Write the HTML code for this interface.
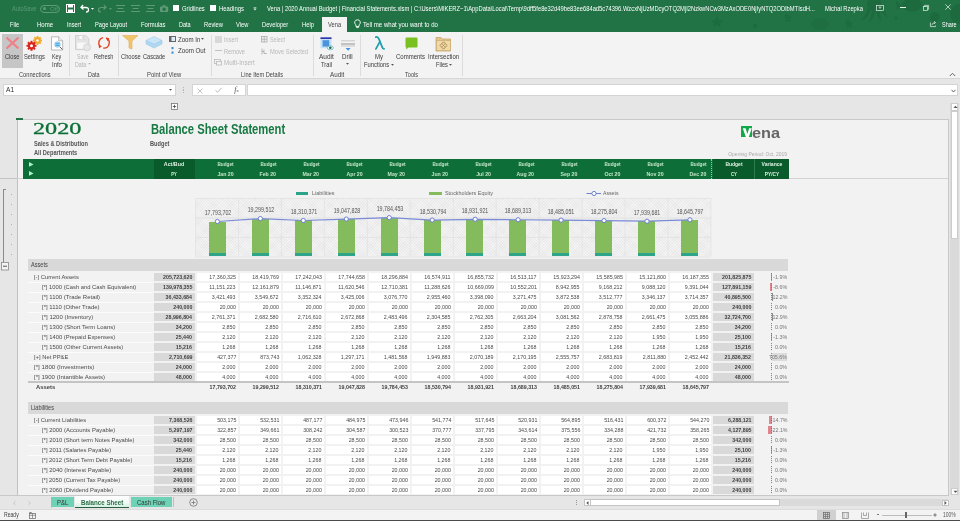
<!DOCTYPE html><html><head><meta charset="utf-8"><style>
html,body{margin:0;padding:0;width:960px;height:521px;overflow:hidden;background:#e6e6e6;}
body{will-change:transform;}
.r{position:absolute;display:block;}
.t{position:absolute;white-space:nowrap;line-height:20px;height:20px;font-family:"Liberation Sans",sans-serif;}
svg.r{overflow:visible;}
</style></head><body>
<div class="r" style="left:0px;top:0px;width:960px;height:32px;background:#217346;"></div>
<svg class="r" style="left:660px;top:0px;" width="300" height="32" viewBox="0 0 300 32"><g fill="#1d6a3e"><ellipse cx="214" cy="4" rx="7" ry="6.5"/><path d="M208 7 Q206 16 201 20 Q205 21 209 14 L211 9Z M212 9 Q212 17 209 22 Q213 21 215 12Z M216 9 Q217 17 221 22 Q220 15 219 9Z M220 7 Q223 15 228 18 Q225 11 222 6Z"/><ellipse cx="252" cy="5" rx="10" ry="6.5"/><path d="M242 5 L236 1 L237 10Z"/><circle cx="275" cy="17" r="5"/><circle cx="300" cy="14" r="10"/><circle cx="236" cy="18" r="1.6"/><circle cx="196" cy="8" r="1.5"/><ellipse cx="160" cy="24" rx="9" ry="6" opacity="0.6"/><path d="M55 20 l2 -4 l2 4 l4 1 l-3 2 l1 4 l-4 -2 l-4 2 l1 -4 l-3 -2Z" opacity="0.8"/><path d="M125 16 l2 -3 l2 3 l3 1 l-2 2 l1 3 l-3 -1 l-3 1 l1 -3 l-2 -2Z" opacity="0.8"/><path d="M186 22 l2 -3 l2 3 l3 1 l-2 2 l1 3 l-3 -1 l-3 1 l1 -3 l-2 -2Z" opacity="0.8"/><circle cx="95" cy="26" r="2"/></g></svg>
<div class="t" style="left:11.5px;top:-1.5px;font-size:7.2px;color:#5f9a78;font-weight:400;font-family:'Liberation Sans',sans-serif;transform:scaleX(0.7850);transform-origin:left center;">AutoSave</div>
<div class="r" style="left:40px;top:4.5px;width:18px;height:6.5px;border:1px solid #5f9a78;border-radius:4px;"></div>
<div class="r" style="left:43px;top:6.5px;width:3px;height:3px;border-radius:50%;background:#5f9a78;"></div>
<div class="t" style="left:50px;top:-1.5px;font-size:6px;color:#5f9a78;font-weight:400;font-family:'Liberation Sans',sans-serif;">Off</div>
<svg class="r" style="left:66px;top:4px;" width="9" height="9" viewBox="0 0 9 9"><rect x="0.5" y="0.5" width="8" height="8" fill="none" stroke="#fff" stroke-width="1"/><rect x="2" y="0.5" width="5" height="3" fill="#fff"/><rect x="2" y="5.5" width="5" height="3" fill="#fff"/></svg>
<svg class="r" style="left:80px;top:3px;" width="16" height="10" viewBox="0 0 16 10"><path d="M3 2 L1 4.5 L3.5 6.5 M1.2 4.5 H5.5 Q8.5 4.5 8.5 7 Q8.5 9 6 9" fill="none" stroke="#fff" stroke-width="1.3"/><path d="M11 5 L14 5 L12.5 6.8Z" fill="#fff"/></svg>
<svg class="r" style="left:98px;top:3px;" width="16" height="10" viewBox="0 0 16 10"><path d="M6 2 L8 4.5 L5.5 6.5 M7.8 4.5 H3.5 Q0.5 4.5 0.5 7 Q0.5 9 3 9" fill="none" stroke="#5f9a78" stroke-width="1.2"/><path d="M11 5 L14 5 L12.5 6.8Z" fill="#5f9a78"/></svg>
<svg class="r" style="left:116px;top:4px;" width="9" height="9" viewBox="0 0 9 9"><path d="M0 1.5H9M1.5 4.5H7.5M0 7.5H9" stroke="#5f9a78" stroke-width="1"/></svg>
<svg class="r" style="left:131px;top:4px;" width="9" height="9" viewBox="0 0 9 9"><path d="M0 1.5H9M1.5 4.5H7.5M0 7.5H9" stroke="#5f9a78" stroke-width="1"/></svg>
<svg class="r" style="left:146px;top:4px;" width="9" height="9" viewBox="0 0 9 9"><path d="M0 1.5H9M1.5 4.5H7.5M0 7.5H9" stroke="#5f9a78" stroke-width="1"/></svg>
<svg class="r" style="left:159.5px;top:4.5px;" width="9" height="7" viewBox="0 0 9 7"><rect x="0" y="1.5" width="8.2" height="5.5" rx="0.8" fill="#5f9a78"/><rect x="2.5" y="0.2" width="3.2" height="1.6" fill="#5f9a78"/><circle cx="4.1" cy="4.2" r="1.7" fill="#217346"/></svg>
<div class="r" style="left:173px;top:5px;width:6px;height:6px;background:#fff;"></div>
<div class="t" style="left:181.75px;top:-1.5px;font-size:7.4px;color:#fff;font-weight:400;font-family:'Liberation Sans',sans-serif;transform:scaleX(0.7793);transform-origin:left center;">Gridlines</div>
<div class="r" style="left:210px;top:5px;width:6px;height:6px;background:#fff;"></div>
<div class="t" style="left:219px;top:-1.5px;font-size:7.4px;color:#fff;font-weight:400;font-family:'Liberation Sans',sans-serif;transform:scaleX(0.7964);transform-origin:left center;">Headings</div>
<svg class="r" style="left:252.5px;top:6.5px;" width="4" height="4" viewBox="0 0 4 4"><path d="M0.6 0.5H3.4" stroke="#e8f0ea" stroke-width="0.6"/><path d="M0.4 1.6H3.6L2 3.6Z" fill="#e8f0ea"/></svg>
<div class="t" style="left:267px;top:-1.0999999999999996px;font-size:7.2px;color:#fff;font-weight:400;font-family:'Liberation Sans',sans-serif;transform:scaleX(0.8052);transform-origin:left center;">Vena | 2020 Annual Budget | Financial Statements.xlsm | C:\Users\MIKERZ~1\AppData\Local\Temp\9dff5fe8e32d49be83ee684ad5c74396.WzcxNjUzMDcyOTQ2MjI2NzkwNCw3MzAxODE0NjIyNTQ2ODlbMTIsdH...</div>
<div class="t" style="left:825px;top:-1.3000000000000007px;font-size:7.2px;color:#fff;font-weight:400;font-family:'Liberation Sans',sans-serif;transform:scaleX(0.8045);transform-origin:left center;">Michal Rzepka</div>
<svg class="r" style="left:876px;top:5px;" width="8" height="6" viewBox="0 0 8 6"><rect x="0.4" y="0.4" width="7" height="5.2" fill="none" stroke="#e8f0ea" stroke-width="0.7"/><path d="M2.5 2.2H5.5M4 1.5V4" stroke="#e8f0ea" stroke-width="0.6"/></svg>
<div class="r" style="left:899.5px;top:7.3px;width:6.5px;height:0.7px;background:#e8f0ea;"></div>
<svg class="r" style="left:922.5px;top:4.5px;" width="6" height="6" viewBox="0 0 6 6"><rect x="0.4" y="1.6" width="4" height="4" fill="none" stroke="#e8f0ea" stroke-width="0.7"/><path d="M1.6 1.6V0.4H5.6V4.4H4.4" fill="none" stroke="#e8f0ea" stroke-width="0.7"/></svg>
<svg class="r" style="left:944.5px;top:4px;" width="6" height="6" viewBox="0 0 6 6"><path d="M0.3 0.3L5.7 5.7M5.7 0.3L0.3 5.7" stroke="#e8f0ea" stroke-width="0.7"/></svg>
<div class="t" style="left:10px;top:14.7px;font-size:6.5px;color:#fff;font-weight:400;font-family:'Liberation Sans',sans-serif;transform:scaleX(0.8600);transform-origin:left center;">File</div>
<div class="t" style="left:37px;top:14.7px;font-size:6.5px;color:#fff;font-weight:400;font-family:'Liberation Sans',sans-serif;transform:scaleX(0.9219);transform-origin:left center;">Home</div>
<div class="t" style="left:67px;top:14.7px;font-size:6.5px;color:#fff;font-weight:400;font-family:'Liberation Sans',sans-serif;transform:scaleX(0.8615);transform-origin:left center;">Insert</div>
<div class="t" style="left:95px;top:14.7px;font-size:6.5px;color:#fff;font-weight:400;font-family:'Liberation Sans',sans-serif;transform:scaleX(0.8768);transform-origin:left center;">Page Layout</div>
<div class="t" style="left:140.6px;top:14.7px;font-size:6.5px;color:#fff;font-weight:400;font-family:'Liberation Sans',sans-serif;transform:scaleX(0.9039);transform-origin:left center;">Formulas</div>
<div class="t" style="left:178.5px;top:14.7px;font-size:6.5px;color:#fff;font-weight:400;font-family:'Liberation Sans',sans-serif;transform:scaleX(0.8511);transform-origin:left center;">Data</div>
<div class="t" style="left:203.6px;top:14.7px;font-size:6.5px;color:#fff;font-weight:400;font-family:'Liberation Sans',sans-serif;transform:scaleX(0.8912);transform-origin:left center;">Review</div>
<div class="t" style="left:235.7px;top:14.7px;font-size:6.5px;color:#fff;font-weight:400;font-family:'Liberation Sans',sans-serif;transform:scaleX(0.8801);transform-origin:left center;">View</div>
<div class="t" style="left:261.9px;top:14.7px;font-size:6.5px;color:#fff;font-weight:400;font-family:'Liberation Sans',sans-serif;transform:scaleX(0.8839);transform-origin:left center;">Developer</div>
<div class="t" style="left:302px;top:14.7px;font-size:6.5px;color:#fff;font-weight:400;font-family:'Liberation Sans',sans-serif;transform:scaleX(0.8984);transform-origin:left center;">Help</div>
<div class="r" style="left:322px;top:17px;width:25px;height:15px;background:#f3f3f3;"></div>
<div class="t" style="left:327.5px;top:14.899999999999999px;font-size:6.5px;color:#444;font-weight:400;font-family:'Liberation Sans',sans-serif;transform:scaleX(0.8820);transform-origin:left center;">Vena</div>
<svg class="r" style="left:354px;top:19px;" width="7" height="10" viewBox="0 0 7 10"><path d="M3.5 0.8 A2.7 2.7 0 0 1 5.3 5.6 L5 7.5 H2 L1.7 5.6 A2.7 2.7 0 0 1 3.5 0.8Z" fill="none" stroke="#fff" stroke-width="0.9"/><path d="M2.3 8.6H4.7" stroke="#fff" stroke-width="0.9"/></svg>
<div class="t" style="left:363.2px;top:14.7px;font-size:6.6px;color:#fff;font-weight:400;font-family:'Liberation Sans',sans-serif;transform:scaleX(0.9209);transform-origin:left center;">Tell me what you want to do</div>
<svg class="r" style="left:929.5px;top:20px;" width="6" height="7" viewBox="0 0 6 7"><path d="M0.4 2.5V6.6H5.6V5.5" fill="none" stroke="#e8f0ea" stroke-width="0.7"/><path d="M1.8 5.2 Q2.2 2.6 5.4 2.6 M4 1.2 L5.5 2.6 L4 4" fill="none" stroke="#e8f0ea" stroke-width="0.7"/></svg>
<div class="t" style="left:941.8px;top:14.7px;font-size:6.5px;color:#fff;font-weight:400;font-family:'Liberation Sans',sans-serif;transform:scaleX(0.8413);transform-origin:left center;">Share</div>
<div class="r" style="left:0px;top:32px;width:960px;height:46px;background:#f3f3f3;"></div>
<div class="r" style="left:0px;top:78px;width:960px;height:1px;background:#d6d6d6;"></div>
<div class="r" style="left:0px;top:79px;width:960px;height:442px;background:#e6e6e6;"></div>
<div class="r" style="left:69px;top:35px;width:1px;height:41px;background:#dcdcdc;"></div>
<div class="r" style="left:117.5px;top:35px;width:1px;height:41px;background:#dcdcdc;"></div>
<div class="r" style="left:210.5px;top:35px;width:1px;height:41px;background:#dcdcdc;"></div>
<div class="r" style="left:313px;top:35px;width:1px;height:41px;background:#dcdcdc;"></div>
<div class="r" style="left:360px;top:35px;width:1px;height:41px;background:#dcdcdc;"></div>
<div class="r" style="left:462px;top:35px;width:1px;height:41px;background:#dcdcdc;"></div>
<div class="r" style="left:2px;top:34px;width:21px;height:34px;background:#c6c6c6;"></div>
<svg class="r" style="left:5px;top:36px;" width="15" height="14" viewBox="0 0 15 14"><path d="M1.5 1.5L13.5 12.5M13.5 1.5L1.5 12.5" stroke="#f07f86" stroke-width="2.2"/></svg>
<div class="t" style="left:5px;top:47.0px;font-size:6.5px;color:#3a3a3a;font-weight:400;font-family:'Liberation Sans',sans-serif;transform:scaleX(0.8731);transform-origin:left center;">Close</div>
<svg class="r" style="left:25px;top:36px;" width="18" height="15" viewBox="0 0 18 15"><g fill="#f5a623"><circle cx="12.5" cy="4.5" r="3.2"/></g><g fill="#f5a623"><rect x="11.6" y="0" width="1.8" height="9" transform="rotate(0 12.5 4.5)"/><rect x="11.6" y="0" width="1.8" height="9" transform="rotate(45 12.5 4.5)"/><rect x="11.6" y="0" width="1.8" height="9" transform="rotate(90 12.5 4.5)"/><rect x="11.6" y="0" width="1.8" height="9" transform="rotate(135 12.5 4.5)"/></g><circle cx="12.5" cy="4.5" r="1.3" fill="#fff"/><circle cx="6.5" cy="9.8" r="3.6" fill="#d9261c"/><rect x="5.5" y="4.8" width="2" height="10" fill="#d9261c" transform="rotate(0 6.5 9.8)"/><rect x="5.5" y="4.8" width="2" height="10" fill="#d9261c" transform="rotate(45 6.5 9.8)"/><rect x="5.5" y="4.8" width="2" height="10" fill="#d9261c" transform="rotate(90 6.5 9.8)"/><rect x="5.5" y="4.8" width="2" height="10" fill="#d9261c" transform="rotate(135 6.5 9.8)"/><circle cx="6.5" cy="9.8" r="1.5" fill="#fff"/></svg>
<div class="t" style="left:24px;top:47.0px;font-size:6.5px;color:#3a3a3a;font-weight:400;font-family:'Liberation Sans',sans-serif;transform:scaleX(0.8937);transform-origin:left center;">Settings</div>
<svg class="r" style="left:50px;top:35.5px;" width="14" height="15" viewBox="0 0 14 15"><path d="M1.5 0.8H8.7L12.7 4.8V14H1.5Z" fill="#fff" stroke="#a3a3a3" stroke-width="0.75"/><path d="M8.7 0.8V4.8H12.7" fill="#eee" stroke="#a3a3a3" stroke-width="0.7"/><path d="M9.6 10.6L12.4 13.4" stroke="#555" stroke-width="0.9"/><circle cx="7.5" cy="8.5" r="2.8" fill="#a9def7" stroke="#79b4e0" stroke-width="0.6"/><path d="M5.6 7.7H9.4M5.6 9.4H9.4" stroke="#2a8fd2" stroke-width="0.8"/></svg>
<div class="t" style="left:52px;top:47.0px;font-size:6.5px;color:#3a3a3a;font-weight:400;font-family:'Liberation Sans',sans-serif;transform:scaleX(0.8250);transform-origin:left center;">Key</div>
<div class="t" style="left:52px;top:54.8px;font-size:6.5px;color:#3a3a3a;font-weight:400;font-family:'Liberation Sans',sans-serif;transform:scaleX(0.9120);transform-origin:left center;">Info</div>
<div class="t" style="left:19px;top:64.5px;font-size:6.3px;color:#444;font-weight:400;font-family:'Liberation Sans',sans-serif;transform:scaleX(0.9021);transform-origin:left center;">Connections</div>
<svg class="r" style="left:74.8px;top:34.8px;" width="17" height="17" viewBox="0 0 17 17"><path d="M0.5 0.5H10.8L13.8 3.5V14.6H0.5Z" fill="#e4e4e4" stroke="#cdcdcd" stroke-width="0.9"/><rect x="3.8" y="0.5" width="6" height="4.2" fill="#f8f8f8" stroke="#d0d0d0" stroke-width="0.6"/><rect x="7.6" y="1.4" width="1.3" height="2.2" fill="#c4c4c4"/><rect x="2.2" y="7.6" width="9.6" height="6" fill="#f8f8f8"/><circle cx="12.1" cy="12.4" r="3.5" fill="#e6e6e6" stroke="#cfcfcf" stroke-width="0.8"/></svg>
<div class="t" style="left:76.8px;top:47.0px;font-size:6.5px;color:#b4b4b4;font-weight:400;font-family:'Liberation Sans',sans-serif;transform:scaleX(0.7895);transform-origin:left center;">Save</div>
<div class="t" style="left:75px;top:54.8px;font-size:6.5px;color:#b4b4b4;font-weight:400;font-family:'Liberation Sans',sans-serif;transform:scaleX(0.8147);transform-origin:left center;">Data</div>
<svg class="r" style="left:88.2px;top:63.400000000000006px;" width="3" height="2" viewBox="0 0 3 2"><path d="M0 0H3L1.5 1.8Z" fill="#bbb"/></svg>
<svg class="r" style="left:97px;top:36px;" width="14" height="14" viewBox="0 0 14 14"><path d="M6.1 1.6 A5.3 5.3 0 0 0 3.0 10.2" fill="none" stroke="#e5411d" stroke-width="1.4"/><path d="M9.4 2.1 A5.3 5.3 0 0 1 6.3 12.05" fill="none" stroke="#e5411d" stroke-width="1.4"/><path d="M8.6 1.6L12.4 2.2L10.6 5.2Z" fill="#e5411d"/><path d="M1.6 8.6L5.0 10.6L2.0 12.2Z" fill="#e5411d"/></svg>
<div class="t" style="left:93.7px;top:47.0px;font-size:6.5px;color:#3a3a3a;font-weight:400;font-family:'Liberation Sans',sans-serif;transform:scaleX(0.8484);transform-origin:left center;">Refresh</div>
<div class="t" style="left:87.8px;top:64.5px;font-size:6.3px;color:#444;font-weight:400;font-family:'Liberation Sans',sans-serif;transform:scaleX(0.8631);transform-origin:left center;">Data</div>
<svg class="r" style="left:122px;top:35px;" width="17" height="15" viewBox="0 0 17 15"><path d="M0.5 0.5H16L10 6V14L7 13V6Z" fill="#f2c46d" stroke="#e0b050" stroke-width="0.6"/></svg>
<div class="t" style="left:120.7px;top:47.0px;font-size:6.5px;color:#3a3a3a;font-weight:400;font-family:'Liberation Sans',sans-serif;transform:scaleX(0.8842);transform-origin:left center;">Choose</div>
<svg class="r" style="left:145px;top:36px;" width="18" height="14" viewBox="0 0 18 14"><path d="M9 0.5L17 4.5L9 8.5L1 4.5Z" fill="#c9e6f8" stroke="#9cc8e6" stroke-width="0.6"/><path d="M1 4.5V8L9 12L17 8V4.5L9 8.5Z" fill="#b0d8f2" stroke="#9cc8e6" stroke-width="0.6"/></svg>
<div class="t" style="left:143px;top:47.0px;font-size:6.5px;color:#3a3a3a;font-weight:400;font-family:'Liberation Sans',sans-serif;transform:scaleX(0.8658);transform-origin:left center;">Cascade</div>
<svg class="r" style="left:168.5px;top:36px;" width="7" height="6" viewBox="0 0 7 6"><rect x="0.5" y="0.5" width="6" height="5" fill="#ddeef8" stroke="#666" stroke-width="1"/><rect x="0.5" y="0.5" width="2" height="5" fill="#666"/></svg>
<div class="t" style="left:177.6px;top:29.799999999999997px;font-size:6.5px;color:#3a3a3a;font-weight:400;font-family:'Liberation Sans',sans-serif;transform:scaleX(0.9390);transform-origin:left center;">Zoom In</div>
<svg class="r" style="left:201.3px;top:38.2px;" width="3" height="2" viewBox="0 0 3 2"><path d="M0 0H3L1.5 1.8Z" fill="#555"/></svg>
<svg class="r" style="left:171px;top:47px;" width="3" height="7" viewBox="0 0 3 7"><rect x="0.5" y="0" width="2" height="2.2" fill="#3a90d8"/><rect x="0.5" y="4.5" width="2" height="2.2" fill="#3a90d8"/></svg>
<div class="t" style="left:177.5px;top:41.3px;font-size:6.5px;color:#3a3a3a;font-weight:400;font-family:'Liberation Sans',sans-serif;transform:scaleX(0.9518);transform-origin:left center;">Zoom Out</div>
<div class="t" style="left:146.8px;top:64.5px;font-size:6.3px;color:#444;font-weight:400;font-family:'Liberation Sans',sans-serif;transform:scaleX(0.9327);transform-origin:left center;">Point of View</div>
<div class="r" style="left:215px;top:36px;width:6.5px;height:6.5px;background:#d8d8d8;"></div>
<div class="t" style="left:224px;top:30.099999999999994px;font-size:6.5px;color:#b8b8b8;font-weight:400;font-family:'Liberation Sans',sans-serif;transform:scaleX(0.8615);transform-origin:left center;">Insert</div>
<div class="r" style="left:215px;top:50px;width:7px;height:1px;background:#c0c0c0;"></div>
<div class="t" style="left:224px;top:41.599999999999994px;font-size:6.5px;color:#b8b8b8;font-weight:400;font-family:'Liberation Sans',sans-serif;transform:scaleX(0.8673);transform-origin:left center;">Remove</div>
<svg class="r" style="left:213.5px;top:59px;" width="9" height="7" viewBox="0 0 9 7"><rect x="0.5" y="0.5" width="6" height="4" fill="none" stroke="#bbb" stroke-width="0.8"/><rect x="2.5" y="2.5" width="5" height="3.5" fill="#f3f3f3" stroke="#bbb" stroke-width="0.8"/></svg>
<div class="t" style="left:224px;top:53.099999999999994px;font-size:6.5px;color:#b8b8b8;font-weight:400;font-family:'Liberation Sans',sans-serif;transform:scaleX(0.9582);transform-origin:left center;">Multi-Insert</div>
<svg class="r" style="left:261px;top:36px;" width="6.5" height="6.5" viewBox="0 0 6.5 6.5"><rect x="0.5" y="0.5" width="5.5" height="5.5" fill="none" stroke="#aaa" stroke-width="0.8"/><path d="M3.2 0.5V6M0.5 3.2H6" stroke="#aaa" stroke-width="0.8"/></svg>
<div class="t" style="left:269.7px;top:30.099999999999994px;font-size:6.5px;color:#b8b8b8;font-weight:400;font-family:'Liberation Sans',sans-serif;transform:scaleX(0.8246);transform-origin:left center;">Select</div>
<svg class="r" style="left:261px;top:47.5px;" width="7" height="7" viewBox="0 0 7 7"><path d="M1 0.5V6.5M1 3.5H3M3 1.5V5.5H6" fill="none" stroke="#aaa" stroke-width="0.8"/></svg>
<div class="t" style="left:269.7px;top:41.599999999999994px;font-size:6.5px;color:#b8b8b8;font-weight:400;font-family:'Liberation Sans',sans-serif;transform:scaleX(0.8907);transform-origin:left center;">Move Selected</div>
<div class="t" style="left:241px;top:64.5px;font-size:6.3px;color:#444;font-weight:400;font-family:'Liberation Sans',sans-serif;transform:scaleX(0.8949);transform-origin:left center;">Line Item Details</div>
<svg class="r" style="left:319.5px;top:36.5px;" width="16" height="15" viewBox="0 0 16 15"><rect x="0.5" y="0.4" width="11" height="10.8" fill="#c4e2f8"/><rect x="0.5" y="0.4" width="11" height="1.5" fill="#23239e"/><rect x="2.6" y="3.2" width="6.6" height="6.4" fill="#4d92dc"/><path d="M2.6 3.2V9.6" stroke="#8cc4ee" stroke-width="0.6"/><ellipse cx="10.3" cy="10.8" rx="3.1" ry="2" fill="#e8f6f6" stroke="#3b8f92" stroke-width="0.5"/><circle cx="10.3" cy="10.8" r="1.3" fill="#0f6f73"/></svg>
<div class="t" style="left:318.8px;top:47.0px;font-size:6.5px;color:#3a3a3a;font-weight:400;font-family:'Liberation Sans',sans-serif;transform:scaleX(0.9987);transform-origin:left center;">Audit</div>
<div class="t" style="left:321px;top:54.7px;font-size:6.5px;color:#3a3a3a;font-weight:400;font-family:'Liberation Sans',sans-serif;transform:scaleX(0.8884);transform-origin:left center;">Trail</div>
<svg class="r" style="left:340.5px;top:39.5px;" width="15" height="12" viewBox="0 0 15 12"><path d="M0 0.8H14M0 4H14M0 6H14" stroke="#b4b4b4" stroke-width="0.7"/><path d="M0 4H14" stroke="#8f8f8f" stroke-width="0.7"/><path d="M4.6 8H9.6L7.1 10.8Z" fill="#4a90d9"/></svg>
<div class="t" style="left:341.9px;top:47.0px;font-size:6.5px;color:#3a3a3a;font-weight:400;font-family:'Liberation Sans',sans-serif;transform:scaleX(0.9481);transform-origin:left center;">Drill</div>
<svg class="r" style="left:345.8px;top:63.3px;" width="3" height="2" viewBox="0 0 3 2"><path d="M0 0H3L1.5 1.8Z" fill="#555"/></svg>
<div class="t" style="left:329.9px;top:64.5px;font-size:6.3px;color:#444;font-weight:400;font-family:'Liberation Sans',sans-serif;transform:scaleX(0.9955);transform-origin:left center;">Audit</div>
<svg class="r" style="left:372.8px;top:35px;" width="13" height="16" viewBox="0 0 13 16"><path d="M2.8 2.1 Q4.9 1.4 6.1 4.4 L9.4 12.6 Q9.9 13.8 11.1 13.8" fill="none" stroke="#1f9fae" stroke-width="1.75" stroke-linecap="round"/><path d="M6.9 6.6 L2.9 13.9" fill="none" stroke="#1f9fae" stroke-width="1.75" stroke-linecap="round"/></svg>
<div class="t" style="left:375px;top:46.699999999999996px;font-size:6.5px;color:#3a3a3a;font-weight:400;font-family:'Liberation Sans',sans-serif;transform:scaleX(0.9219);transform-origin:left center;">My</div>
<div class="t" style="left:363.75px;top:55.05px;font-size:6.5px;color:#3a3a3a;font-weight:400;font-family:'Liberation Sans',sans-serif;transform:scaleX(0.8961);transform-origin:left center;">Functions</div>
<svg class="r" style="left:390.7px;top:63.599999999999994px;" width="3" height="2" viewBox="0 0 3 2"><path d="M0 0H3L1.5 1.8Z" fill="#555"/></svg>
<svg class="r" style="left:404.5px;top:36.5px;" width="13" height="13" viewBox="0 0 13 13"><path d="M1.5 0.5H11.5A1 1 0 0 1 12.5 1.5V9.5A1 1 0 0 1 11.5 10.5H3.5L1.2 12.6V10.5A1 1 0 0 1 0.5 9.5V1.5A1 1 0 0 1 1.5 0.5Z" fill="#7ac020"/></svg>
<div class="t" style="left:396px;top:46.699999999999996px;font-size:6.5px;color:#3a3a3a;font-weight:400;font-family:'Liberation Sans',sans-serif;transform:scaleX(0.9228);transform-origin:left center;">Comments</div>
<svg class="r" style="left:435px;top:34.5px;" width="17" height="17" viewBox="0 0 17 17"><path d="M1 2.5H6L7.5 4H15.5V16H1Z" fill="#e2c58d" stroke="#c9a66a" stroke-width="0.8"/><rect x="1.5" y="5.5" width="14" height="10.2" fill="#f0d9a8" stroke="#c9a66a" stroke-width="0.6"/><path d="M8.5 6.8L12 10.5L8.5 14.2L5 10.5Z" fill="none" stroke="#a58345" stroke-width="0.9"/><path d="M6.8 8.6L10.2 12.3M10.2 8.6L6.8 12.3" stroke="#a58345" stroke-width="0.6"/></svg>
<div class="t" style="left:427.9px;top:46.699999999999996px;font-size:6.5px;color:#3a3a3a;font-weight:400;font-family:'Liberation Sans',sans-serif;transform:scaleX(0.9255);transform-origin:left center;">Intersection</div>
<div class="t" style="left:435.6px;top:55.05px;font-size:6.5px;color:#3a3a3a;font-weight:400;font-family:'Liberation Sans',sans-serif;transform:scaleX(0.8677);transform-origin:left center;">Files</div>
<svg class="r" style="left:448.8px;top:63.599999999999994px;" width="3" height="2" viewBox="0 0 3 2"><path d="M0 0H3L1.5 1.8Z" fill="#555"/></svg>
<div class="t" style="left:405px;top:64.5px;font-size:6.3px;color:#444;font-weight:400;font-family:'Liberation Sans',sans-serif;transform:scaleX(0.8837);transform-origin:left center;">Tools</div>
<svg class="r" style="left:948.5px;top:71.5px;" width="7" height="5" viewBox="0 0 7 5"><path d="M0.8 4L3.5 1.3L6.2 4" fill="none" stroke="#666" stroke-width="1"/></svg>
<div class="r" style="left:2.5px;top:83.8px;width:173.5px;height:12.5px;background:#fff;border:1px solid #d4d4d4;box-sizing:border-box;"></div>
<div class="t" style="left:6.3px;top:80.2px;font-size:7.2px;color:#333;font-weight:400;font-family:'Liberation Sans',sans-serif;transform:scaleX(0.9200);transform-origin:left center;">A1</div>
<svg class="r" style="left:169.3px;top:88.8px;" width="3" height="2" viewBox="0 0 3 2"><path d="M0 0H3L1.5 1.8Z" fill="#555"/></svg>
<div class="r" style="left:183.2px;top:87px;width:0.8px;height:0.9px;background:#b4b4b4;"></div>
<div class="r" style="left:183.2px;top:88.5px;width:0.8px;height:0.9px;background:#b4b4b4;"></div>
<div class="r" style="left:183.2px;top:90px;width:0.8px;height:0.9px;background:#b4b4b4;"></div>
<div class="r" style="left:183.2px;top:91.5px;width:0.8px;height:0.9px;background:#b4b4b4;"></div>
<div class="r" style="left:191.5px;top:83.8px;width:54.5px;height:12.5px;background:#fff;border:1px solid #d4d4d4;box-sizing:border-box;"></div>
<svg class="r" style="left:196.5px;top:87.5px;" width="6" height="6" viewBox="0 0 6 6"><path d="M0.5 0.5L5.5 5.5M5.5 0.5L0.5 5.5" stroke="#bdbdbd" stroke-width="0.9"/></svg>
<svg class="r" style="left:215px;top:87.3px;" width="7" height="6" viewBox="0 0 7 6"><path d="M0.5 3.2L2.6 5.3L6.6 0.8" fill="none" stroke="#b0b0b0" stroke-width="0.9"/></svg>
<div class="t" style="left:-63.5px;width:600px;text-align:center;top:80.0px;font-size:8px;color:#555;font-weight:400;font-family:'Liberation Serif',sans-serif;"><i>f</i><span style="font-size:5px">x</span></div>
<div class="r" style="left:247px;top:83.8px;width:710.5px;height:12.5px;background:#fff;border:1px solid #d4d4d4;box-sizing:border-box;"></div>
<svg class="r" style="left:950.5px;top:88.5px;" width="5" height="4" viewBox="0 0 5 4"><path d="M0.5 0.8L2.5 3L4.5 0.8" fill="none" stroke="#555" stroke-width="0.9"/></svg>
<div class="r" style="left:17px;top:119px;width:931.5px;height:376px;background:#f2f2f2;"></div>
<div class="r" style="left:17px;top:119px;width:931.5px;height:1px;background:#c8c8c8;"></div>
<div class="r" style="left:17px;top:119px;width:1px;height:376px;background:#c0c0c0;"></div>
<div class="r" style="left:948px;top:119px;width:1px;height:376px;background:#c8c8c8;"></div>
<div class="r" style="left:16px;top:118px;width:7px;height:1.5px;background:#217346;"></div>
<div class="r" style="left:0px;top:178px;width:17px;height:1px;background:#c4c4c4;"></div>
<svg class="r" style="left:170.5px;top:103px;" width="7" height="7" viewBox="0 0 7 7"><rect x="0.5" y="0.5" width="6" height="6" fill="#fff" stroke="#777" stroke-width="0.8"/><path d="M1.8 3.5H5.2M3.5 1.8V5.2" stroke="#444" stroke-width="0.8"/></svg>
<div class="r" style="left:3px;top:189px;width:1px;height:73px;background:#8a8a8a;"></div>
<div class="r" style="left:3px;top:189px;width:3px;height:1px;background:#8a8a8a;"></div>
<div class="r" style="left:10.5px;top:193.5px;width:1px;height:1px;background:#b0b0b0;"></div>
<div class="r" style="left:10.5px;top:203.5px;width:1px;height:1px;background:#b0b0b0;"></div>
<div class="r" style="left:10.5px;top:213.5px;width:1px;height:1px;background:#b0b0b0;"></div>
<div class="r" style="left:10.5px;top:223.5px;width:1px;height:1px;background:#b0b0b0;"></div>
<div class="r" style="left:10.5px;top:233.5px;width:1px;height:1px;background:#b0b0b0;"></div>
<div class="r" style="left:10.5px;top:243.5px;width:1px;height:1px;background:#b0b0b0;"></div>
<div class="r" style="left:10.5px;top:253.5px;width:1px;height:1px;background:#b0b0b0;"></div>
<svg class="r" style="left:1px;top:261.5px;" width="8" height="8.5" viewBox="0 0 8 8.5"><rect x="0.5" y="0.5" width="7" height="7.5" fill="#f4f4f4" stroke="#888" stroke-width="0.8"/><path d="M2 4.2H6" stroke="#444" stroke-width="0.9"/></svg>
<div class="r" style="left:949px;top:97px;width:11px;height:398px;background:#e6e6e6;"></div>
<div class="r" style="left:950.3px;top:102.5px;width:8.8px;height:392.5px;background:#dadada;"></div>
<div class="r" style="left:951.2px;top:102.5px;width:7px;height:8px;background:#fff;border:0.5px solid #ccc;box-sizing:border-box;"></div>
<svg class="r" style="left:952.5px;top:104.5px;" width="5" height="4" viewBox="0 0 5 4"><path d="M0.5 3L2.5 0.8L4.5 3Z" fill="#555"/></svg>
<div class="r" style="left:951.2px;top:110.5px;width:7px;height:128px;background:#fff;border:0.5px solid #ccc;box-sizing:border-box;"></div>
<div class="r" style="left:951.2px;top:487.5px;width:7px;height:7.5px;background:#fff;border:0.5px solid #ccc;box-sizing:border-box;"></div>
<svg class="r" style="left:952.5px;top:489.5px;" width="5" height="4" viewBox="0 0 5 4"><path d="M0.5 0.8L2.5 3L4.5 0.8Z" fill="#555"/></svg>
<div class="t" style="left:32.8px;top:118.5px;font-size:16.6px;color:#0c6f35;font-weight:400;font-family:'Liberation Serif',sans-serif;transform:scaleX(1.4578);transform-origin:left center;-webkit-text-stroke:0.3px #0c6f35;">2020</div>
<div class="t" style="left:34px;top:133.6px;font-size:6.6px;color:#555;font-weight:700;font-family:'Liberation Sans',sans-serif;transform:scaleX(0.8612);transform-origin:left center;">Sales &amp; Distribution</div>
<div class="t" style="left:34px;top:143.2px;font-size:6.6px;color:#555;font-weight:700;font-family:'Liberation Sans',sans-serif;transform:scaleX(0.8554);transform-origin:left center;">All Departments</div>
<div class="t" style="left:150.8px;top:118.6px;font-size:14.0px;color:#167a42;font-weight:700;font-family:'Liberation Sans',sans-serif;transform:scaleX(0.8022);transform-origin:left center;">Balance Sheet Statement</div>
<div class="t" style="left:150.2px;top:133.6px;font-size:6.6px;color:#555;font-weight:700;font-family:'Liberation Sans',sans-serif;transform:scaleX(0.8576);transform-origin:left center;">Budget</div>
<div class="r" style="left:740.5px;top:125.5px;width:11px;height:11.5px;background:#13a84a;"></div>
<svg class="r" style="left:740.5px;top:125.5px;" width="11" height="11.5" viewBox="0 0 11 11.5"><path d="M1.8 2.2H4.6L6.3 8L8.2 2.2H10.8L7.6 11.5H5Z" fill="#fff"/></svg>
<div class="t" style="left:751.8px;top:122.6px;font-size:14.0px;color:#666;font-weight:700;font-family:'Liberation Sans',sans-serif;transform:scaleX(1.1643);transform-origin:left center;">ena</div>
<div class="t" style="right:173.20000000000005px;text-align:right;top:143.7px;font-size:6.0px;color:#a8a8a8;font-weight:400;font-family:'Liberation Sans',sans-serif;transform:scaleX(0.8277);transform-origin:right center;">Opening Period: Oct, 2019</div>
<div class="r" style="left:17px;top:178.2px;width:931px;height:0.9px;background:#d2d2d2;"></div>
<div class="r" style="left:22.5px;top:159px;width:766px;height:19.7px;background:#0e6e38;"></div>
<div class="r" style="left:153.5px;top:159px;width:41.5px;height:19.7px;background:#0a5b2c;"></div>
<div class="r" style="left:712.5px;top:159px;width:42px;height:19.7px;background:#0a5b2c;"></div>
<div class="r" style="left:755px;top:159px;width:33.5px;height:19.7px;background:#0a5b2c;"></div>
<div class="r" style="left:754.3px;top:159px;width:0.8px;height:19.7px;background:#2f7d4f;"></div>
<div class="r" style="left:711px;top:159px;width:0;height:19.7px;border-left:1px dotted #9ccaa9;"></div>
<svg class="r" style="left:29px;top:161.5px;" width="5" height="5" viewBox="0 0 5 5"><path d="M0 0L4.5 2.4L0 4.8Z" fill="#b3f0cf"/></svg>
<svg class="r" style="left:29px;top:171.2px;" width="5" height="5" viewBox="0 0 5 5"><path d="M0 0L4.5 2.4L0 4.8Z" fill="#b3f0cf"/></svg>
<div class="t" style="left:-125.6px;width:600px;text-align:center;top:153.9px;font-size:6.0px;color:#dff2e3;font-weight:700;font-family:'Liberation Sans',sans-serif;transform:scaleX(0.8822);transform-origin:center center;">Act/Bud</div>
<div class="t" style="left:-125.6px;width:600px;text-align:center;top:163.7px;font-size:6.0px;color:#dff2e3;font-weight:700;font-family:'Liberation Sans',sans-serif;transform:scaleX(0.6742);transform-origin:center center;">PY</div>
<div class="t" style="right:726.6px;text-align:right;top:153.9px;font-size:6.0px;color:#c2e4c8;font-weight:700;font-family:'Liberation Sans',sans-serif;transform:scaleX(0.7837);transform-origin:right center;">Budget</div>
<div class="t" style="right:726.6px;text-align:right;top:163.7px;font-size:6.0px;color:#c2e4c8;font-weight:700;font-family:'Liberation Sans',sans-serif;transform:scaleX(0.8700);transform-origin:right center;">Jan 20</div>
<div class="t" style="right:683.6px;text-align:right;top:153.9px;font-size:6.0px;color:#c2e4c8;font-weight:700;font-family:'Liberation Sans',sans-serif;transform:scaleX(0.7837);transform-origin:right center;">Budget</div>
<div class="t" style="right:683.6px;text-align:right;top:163.7px;font-size:6.0px;color:#c2e4c8;font-weight:700;font-family:'Liberation Sans',sans-serif;transform:scaleX(0.8700);transform-origin:right center;">Feb 20</div>
<div class="t" style="right:640.6px;text-align:right;top:153.9px;font-size:6.0px;color:#c2e4c8;font-weight:700;font-family:'Liberation Sans',sans-serif;transform:scaleX(0.7837);transform-origin:right center;">Budget</div>
<div class="t" style="right:640.6px;text-align:right;top:163.7px;font-size:6.0px;color:#c2e4c8;font-weight:700;font-family:'Liberation Sans',sans-serif;transform:scaleX(0.8700);transform-origin:right center;">Mar 20</div>
<div class="t" style="right:597.6px;text-align:right;top:153.9px;font-size:6.0px;color:#c2e4c8;font-weight:700;font-family:'Liberation Sans',sans-serif;transform:scaleX(0.7837);transform-origin:right center;">Budget</div>
<div class="t" style="right:597.6px;text-align:right;top:163.7px;font-size:6.0px;color:#c2e4c8;font-weight:700;font-family:'Liberation Sans',sans-serif;transform:scaleX(0.8700);transform-origin:right center;">Apr 20</div>
<div class="t" style="right:554.6px;text-align:right;top:153.9px;font-size:6.0px;color:#c2e4c8;font-weight:700;font-family:'Liberation Sans',sans-serif;transform:scaleX(0.7837);transform-origin:right center;">Budget</div>
<div class="t" style="right:554.6px;text-align:right;top:163.7px;font-size:6.0px;color:#c2e4c8;font-weight:700;font-family:'Liberation Sans',sans-serif;transform:scaleX(0.8700);transform-origin:right center;">May 20</div>
<div class="t" style="right:511.6px;text-align:right;top:153.9px;font-size:6.0px;color:#c2e4c8;font-weight:700;font-family:'Liberation Sans',sans-serif;transform:scaleX(0.7837);transform-origin:right center;">Budget</div>
<div class="t" style="right:511.6px;text-align:right;top:163.7px;font-size:6.0px;color:#c2e4c8;font-weight:700;font-family:'Liberation Sans',sans-serif;transform:scaleX(0.8700);transform-origin:right center;">Jun 20</div>
<div class="t" style="right:468.6px;text-align:right;top:153.9px;font-size:6.0px;color:#c2e4c8;font-weight:700;font-family:'Liberation Sans',sans-serif;transform:scaleX(0.7837);transform-origin:right center;">Budget</div>
<div class="t" style="right:468.6px;text-align:right;top:163.7px;font-size:6.0px;color:#c2e4c8;font-weight:700;font-family:'Liberation Sans',sans-serif;transform:scaleX(0.8700);transform-origin:right center;">Jul 20</div>
<div class="t" style="right:425.6px;text-align:right;top:153.9px;font-size:6.0px;color:#c2e4c8;font-weight:700;font-family:'Liberation Sans',sans-serif;transform:scaleX(0.7837);transform-origin:right center;">Budget</div>
<div class="t" style="right:425.6px;text-align:right;top:163.7px;font-size:6.0px;color:#c2e4c8;font-weight:700;font-family:'Liberation Sans',sans-serif;transform:scaleX(0.8700);transform-origin:right center;">Aug 20</div>
<div class="t" style="right:382.6px;text-align:right;top:153.9px;font-size:6.0px;color:#c2e4c8;font-weight:700;font-family:'Liberation Sans',sans-serif;transform:scaleX(0.7837);transform-origin:right center;">Budget</div>
<div class="t" style="right:382.6px;text-align:right;top:163.7px;font-size:6.0px;color:#c2e4c8;font-weight:700;font-family:'Liberation Sans',sans-serif;transform:scaleX(0.8700);transform-origin:right center;">Sep 20</div>
<div class="t" style="right:339.6px;text-align:right;top:153.9px;font-size:6.0px;color:#c2e4c8;font-weight:700;font-family:'Liberation Sans',sans-serif;transform:scaleX(0.7837);transform-origin:right center;">Budget</div>
<div class="t" style="right:339.6px;text-align:right;top:163.7px;font-size:6.0px;color:#c2e4c8;font-weight:700;font-family:'Liberation Sans',sans-serif;transform:scaleX(0.8700);transform-origin:right center;">Oct 20</div>
<div class="t" style="right:296.6px;text-align:right;top:153.9px;font-size:6.0px;color:#c2e4c8;font-weight:700;font-family:'Liberation Sans',sans-serif;transform:scaleX(0.7837);transform-origin:right center;">Budget</div>
<div class="t" style="right:296.6px;text-align:right;top:163.7px;font-size:6.0px;color:#c2e4c8;font-weight:700;font-family:'Liberation Sans',sans-serif;transform:scaleX(0.8700);transform-origin:right center;">Nov 20</div>
<div class="t" style="right:253.60000000000002px;text-align:right;top:153.9px;font-size:6.0px;color:#c2e4c8;font-weight:700;font-family:'Liberation Sans',sans-serif;transform:scaleX(0.7837);transform-origin:right center;">Budget</div>
<div class="t" style="right:253.60000000000002px;text-align:right;top:163.7px;font-size:6.0px;color:#c2e4c8;font-weight:700;font-family:'Liberation Sans',sans-serif;transform:scaleX(0.8700);transform-origin:right center;">Dec 20</div>
<div class="t" style="left:433.6px;width:600px;text-align:center;top:153.9px;font-size:6.0px;color:#dff2e3;font-weight:700;font-family:'Liberation Sans',sans-serif;transform:scaleX(0.8273);transform-origin:center center;">Budget</div>
<div class="t" style="left:433.6px;width:600px;text-align:center;top:163.7px;font-size:6.0px;color:#dff2e3;font-weight:700;font-family:'Liberation Sans',sans-serif;transform:scaleX(0.7194);transform-origin:center center;">CY</div>
<div class="t" style="left:471.5px;width:600px;text-align:center;top:153.9px;font-size:6.0px;color:#dff2e3;font-weight:700;font-family:'Liberation Sans',sans-serif;transform:scaleX(0.8465);transform-origin:center center;">Variance</div>
<div class="t" style="left:471.5px;width:600px;text-align:center;top:163.7px;font-size:6.0px;color:#dff2e3;font-weight:700;font-family:'Liberation Sans',sans-serif;transform:scaleX(0.8000);transform-origin:center center;">PY/CY</div>
<div class="r" style="left:195.2px;top:198px;width:515.8px;height:58.19999999999999px;background-color:#f4f4f4;background-image:repeating-linear-gradient(45deg,rgba(0,0,0,0.022) 0 1px,transparent 1px 2px),repeating-linear-gradient(-45deg,rgba(0,0,0,0.022) 0 1px,transparent 1px 2px);"></div>
<svg class="r" style="left:195.2px;top:198px;" width="516.8" height="59.19999999999999" viewBox="0 0 516.8 59.19999999999999"><path d="M0.50 0V58.19999999999999" stroke="#e2e2e2" stroke-width="0.8"/><path d="M43.46 0V58.19999999999999" stroke="#e2e2e2" stroke-width="0.8"/><path d="M86.42 0V58.19999999999999" stroke="#e2e2e2" stroke-width="0.8"/><path d="M129.38 0V58.19999999999999" stroke="#e2e2e2" stroke-width="0.8"/><path d="M172.34 0V58.19999999999999" stroke="#e2e2e2" stroke-width="0.8"/><path d="M215.30 0V58.19999999999999" stroke="#e2e2e2" stroke-width="0.8"/><path d="M258.26 0V58.19999999999999" stroke="#e2e2e2" stroke-width="0.8"/><path d="M301.22 0V58.19999999999999" stroke="#e2e2e2" stroke-width="0.8"/><path d="M344.18 0V58.19999999999999" stroke="#e2e2e2" stroke-width="0.8"/><path d="M387.14 0V58.19999999999999" stroke="#e2e2e2" stroke-width="0.8"/><path d="M430.10 0V58.19999999999999" stroke="#e2e2e2" stroke-width="0.8"/><path d="M473.06 0V58.19999999999999" stroke="#e2e2e2" stroke-width="0.8"/><path d="M516.02 0V58.19999999999999" stroke="#e2e2e2" stroke-width="0.8"/><path d="M0 0.50H515.8" stroke="#e2e2e2" stroke-width="0.8"/><path d="M0 20.00H515.8" stroke="#e2e2e2" stroke-width="0.8"/><path d="M0 39.50H515.8" stroke="#e2e2e2" stroke-width="0.8"/><path d="M0 59.00H515.8" stroke="#e2e2e2" stroke-width="0.8"/></svg>
<div class="r" style="left:208.70000000000002px;top:221.5022811px;width:17px;height:34.697718899999984px;background:#84bb5c;"></div>
<div class="r" style="left:208.70000000000002px;top:253.39999999999998px;width:17px;height:2.8px;background:#2ea58b;"></div>
<div class="r" style="left:251.66000000000003px;top:218.5659516px;width:17px;height:37.63404839999998px;background:#84bb5c;"></div>
<div class="r" style="left:251.66000000000003px;top:253.39999999999998px;width:17px;height:2.8px;background:#2ea58b;"></div>
<div class="r" style="left:294.62px;top:220.49477654999998px;width:17px;height:35.705223450000005px;background:#84bb5c;"></div>
<div class="r" style="left:294.62px;top:253.39999999999998px;width:17px;height:2.8px;background:#2ea58b;"></div>
<div class="r" style="left:337.58px;top:219.05673539999998px;width:17px;height:37.14326460000001px;background:#84bb5c;"></div>
<div class="r" style="left:337.58px;top:253.39999999999998px;width:17px;height:2.8px;background:#2ea58b;"></div>
<div class="r" style="left:380.54px;top:217.62031664999998px;width:17px;height:38.57968335000001px;background:#84bb5c;"></div>
<div class="r" style="left:380.54px;top:253.39999999999998px;width:17px;height:2.8px;background:#2ea58b;"></div>
<div class="r" style="left:423.50000000000006px;top:220.0649517px;width:17px;height:36.135048299999994px;background:#84bb5c;"></div>
<div class="r" style="left:423.50000000000006px;top:253.39999999999998px;width:17px;height:2.8px;background:#2ea58b;"></div>
<div class="r" style="left:466.46px;top:219.28275405px;width:17px;height:36.917245949999995px;background:#84bb5c;"></div>
<div class="r" style="left:466.46px;top:253.39999999999998px;width:17px;height:2.8px;background:#2ea58b;"></div>
<div class="r" style="left:509.42px;top:219.75583964999998px;width:17px;height:36.444160350000004px;background:#84bb5c;"></div>
<div class="r" style="left:509.42px;top:253.39999999999998px;width:17px;height:2.8px;background:#2ea58b;"></div>
<div class="r" style="left:552.38px;top:220.15415055px;width:17px;height:36.04584944999999px;background:#84bb5c;"></div>
<div class="r" style="left:552.38px;top:253.39999999999998px;width:17px;height:2.8px;background:#2ea58b;"></div>
<div class="r" style="left:595.3399999999999px;top:220.5621822px;width:17px;height:35.63781779999999px;background:#84bb5c;"></div>
<div class="r" style="left:595.3399999999999px;top:253.39999999999998px;width:17px;height:2.8px;background:#2ea58b;"></div>
<div class="r" style="left:638.3px;top:221.21762205px;width:17px;height:34.98237795px;background:#84bb5c;"></div>
<div class="r" style="left:638.3px;top:253.39999999999998px;width:17px;height:2.8px;background:#2ea58b;"></div>
<div class="r" style="left:681.26px;top:219.84069584999997px;width:17px;height:36.359304150000014px;background:#84bb5c;"></div>
<div class="r" style="left:681.26px;top:253.39999999999998px;width:17px;height:2.8px;background:#2ea58b;"></div>
<svg class="r" style="left:190px;top:190px;" width="530" height="80" viewBox="0 0 530 80"><polyline points="27.40,31.50 70.36,28.57 113.32,30.49 156.28,29.06 199.24,27.62 242.20,30.06 285.16,29.28 328.12,29.76 371.08,30.15 414.04,30.56 457.00,31.22 499.96,29.84" fill="none" stroke="#7a8bd8" stroke-width="1.2"/><circle cx="27.40" cy="31.50" r="2.1" fill="#fff" stroke="#6d7fcf" stroke-width="1"/><circle cx="70.36" cy="28.57" r="2.1" fill="#fff" stroke="#6d7fcf" stroke-width="1"/><circle cx="113.32" cy="30.49" r="2.1" fill="#fff" stroke="#6d7fcf" stroke-width="1"/><circle cx="156.28" cy="29.06" r="2.1" fill="#fff" stroke="#6d7fcf" stroke-width="1"/><circle cx="199.24" cy="27.62" r="2.1" fill="#fff" stroke="#6d7fcf" stroke-width="1"/><circle cx="242.20" cy="30.06" r="2.1" fill="#fff" stroke="#6d7fcf" stroke-width="1"/><circle cx="285.16" cy="29.28" r="2.1" fill="#fff" stroke="#6d7fcf" stroke-width="1"/><circle cx="328.12" cy="29.76" r="2.1" fill="#fff" stroke="#6d7fcf" stroke-width="1"/><circle cx="371.08" cy="30.15" r="2.1" fill="#fff" stroke="#6d7fcf" stroke-width="1"/><circle cx="414.04" cy="30.56" r="2.1" fill="#fff" stroke="#6d7fcf" stroke-width="1"/><circle cx="457.00" cy="31.22" r="2.1" fill="#fff" stroke="#6d7fcf" stroke-width="1"/><circle cx="499.96" cy="29.84" r="2.1" fill="#fff" stroke="#6d7fcf" stroke-width="1"/></svg>
<div class="t" style="left:-82.29999999999998px;width:600px;text-align:center;top:203.2022811px;font-size:6.7px;color:#555;font-weight:400;font-family:'Liberation Sans',sans-serif;transform:scaleX(0.7962);transform-origin:center center;">17,793,702</div>
<div class="t" style="left:-39.339999999999975px;width:600px;text-align:center;top:200.2659516px;font-size:6.7px;color:#555;font-weight:400;font-family:'Liberation Sans',sans-serif;transform:scaleX(0.7962);transform-origin:center center;">19,299,512</div>
<div class="t" style="left:3.6200000000000045px;width:600px;text-align:center;top:202.19477654999997px;font-size:6.7px;color:#555;font-weight:400;font-family:'Liberation Sans',sans-serif;transform:scaleX(0.7962);transform-origin:center center;">18,310,371</div>
<div class="t" style="left:46.579999999999984px;width:600px;text-align:center;top:200.75673539999997px;font-size:6.7px;color:#555;font-weight:400;font-family:'Liberation Sans',sans-serif;transform:scaleX(0.7962);transform-origin:center center;">19,047,828</div>
<div class="t" style="left:89.54000000000002px;width:600px;text-align:center;top:199.32031664999997px;font-size:6.7px;color:#555;font-weight:400;font-family:'Liberation Sans',sans-serif;transform:scaleX(0.7962);transform-origin:center center;">19,784,453</div>
<div class="t" style="left:132.50000000000006px;width:600px;text-align:center;top:201.76495169999998px;font-size:6.7px;color:#555;font-weight:400;font-family:'Liberation Sans',sans-serif;transform:scaleX(0.7962);transform-origin:center center;">18,530,794</div>
<div class="t" style="left:175.45999999999998px;width:600px;text-align:center;top:200.98275404999998px;font-size:6.7px;color:#555;font-weight:400;font-family:'Liberation Sans',sans-serif;transform:scaleX(0.7962);transform-origin:center center;">18,931,921</div>
<div class="t" style="left:218.41999999999996px;width:600px;text-align:center;top:201.45583964999997px;font-size:6.7px;color:#555;font-weight:400;font-family:'Liberation Sans',sans-serif;transform:scaleX(0.7962);transform-origin:center center;">18,689,313</div>
<div class="t" style="left:261.38px;width:600px;text-align:center;top:201.85415054999999px;font-size:6.7px;color:#555;font-weight:400;font-family:'Liberation Sans',sans-serif;transform:scaleX(0.7962);transform-origin:center center;">18,485,051</div>
<div class="t" style="left:304.3399999999999px;width:600px;text-align:center;top:202.26218219999998px;font-size:6.7px;color:#555;font-weight:400;font-family:'Liberation Sans',sans-serif;transform:scaleX(0.7962);transform-origin:center center;">18,275,804</div>
<div class="t" style="left:347.29999999999995px;width:600px;text-align:center;top:202.91762204999998px;font-size:6.7px;color:#555;font-weight:400;font-family:'Liberation Sans',sans-serif;transform:scaleX(0.7962);transform-origin:center center;">17,939,681</div>
<div class="t" style="left:390.26px;width:600px;text-align:center;top:201.54069584999996px;font-size:6.7px;color:#555;font-weight:400;font-family:'Liberation Sans',sans-serif;transform:scaleX(0.7962);transform-origin:center center;">18,645,797</div>
<div class="r" style="left:296px;top:192px;width:12.3px;height:3.2px;background:#2ba38a;"></div>
<div class="t" style="left:311.8px;top:183.3px;font-size:6.0px;color:#666;font-weight:400;font-family:'Liberation Sans',sans-serif;transform:scaleX(0.9072);transform-origin:left center;">Liabilities</div>
<div class="r" style="left:428.8px;top:192px;width:13.2px;height:3.2px;background:#84bb5c;"></div>
<div class="t" style="left:445px;top:183.3px;font-size:6.0px;color:#666;font-weight:400;font-family:'Liberation Sans',sans-serif;transform:scaleX(0.9031);transform-origin:left center;">Stockholders Equity</div>
<svg class="r" style="left:586px;top:190px;" width="16" height="7" viewBox="0 0 16 7"><path d="M0.5 3.5H15" stroke="#6d7fcf" stroke-width="1"/><circle cx="8" cy="3.5" r="2.1" fill="#fff" stroke="#6d7fcf" stroke-width="1"/></svg>
<div class="t" style="left:603.3px;top:183.3px;font-size:6.0px;color:#666;font-weight:400;font-family:'Liberation Sans',sans-serif;transform:scaleX(0.8583);transform-origin:left center;">Assets</div>
<div class="r" style="left:28px;top:259px;width:759.8px;height:12px;background:#d9d9d9;"></div>
<div class="t" style="left:30.7px;top:255.39999999999998px;font-size:6.8px;color:#444;font-weight:400;font-family:'Liberation Sans',sans-serif;transform:scaleX(0.8200);transform-origin:left center;">Assets</div>
<div class="t" style="left:33.8px;top:266.9px;font-size:5.9px;color:#4a4a4a;font-weight:400;font-family:'Liberation Sans',sans-serif;transform:scaleX(0.9851);transform-origin:left center;">[-] Current Assets</div>
<div class="r" style="left:154px;top:273px;width:41px;height:8px;background:#d9d9d9;"></div>
<div class="t" style="right:767.6px;text-align:right;top:267.0px;font-size:6.2px;color:#3e3e3e;font-weight:700;font-family:'Liberation Sans',sans-serif;transform:scaleX(0.8530);transform-origin:right center;">205,723,620</div>
<div class="r" style="left:197px;top:273px;width:41px;height:8px;background:#fff;"></div>
<div class="t" style="right:724.1px;text-align:right;top:267.0px;font-size:6.2px;color:#4a4a4a;font-weight:400;font-family:'Liberation Sans',sans-serif;transform:scaleX(0.8600);transform-origin:right center;">17,360,325</div>
<div class="r" style="left:240px;top:273px;width:41px;height:8px;background:#fff;"></div>
<div class="t" style="right:681.1px;text-align:right;top:267.0px;font-size:6.2px;color:#4a4a4a;font-weight:400;font-family:'Liberation Sans',sans-serif;transform:scaleX(0.8600);transform-origin:right center;">18,419,769</div>
<div class="r" style="left:283px;top:273px;width:41px;height:8px;background:#fff;"></div>
<div class="t" style="right:638.1px;text-align:right;top:267.0px;font-size:6.2px;color:#4a4a4a;font-weight:400;font-family:'Liberation Sans',sans-serif;transform:scaleX(0.8600);transform-origin:right center;">17,242,043</div>
<div class="r" style="left:326px;top:273px;width:41px;height:8px;background:#fff;"></div>
<div class="t" style="right:595.1px;text-align:right;top:267.0px;font-size:6.2px;color:#4a4a4a;font-weight:400;font-family:'Liberation Sans',sans-serif;transform:scaleX(0.8600);transform-origin:right center;">17,744,658</div>
<div class="r" style="left:369px;top:273px;width:41px;height:8px;background:#fff;"></div>
<div class="t" style="right:552.1px;text-align:right;top:267.0px;font-size:6.2px;color:#4a4a4a;font-weight:400;font-family:'Liberation Sans',sans-serif;transform:scaleX(0.8600);transform-origin:right center;">18,296,884</div>
<div class="r" style="left:412px;top:273px;width:41px;height:8px;background:#fff;"></div>
<div class="t" style="right:509.1px;text-align:right;top:267.0px;font-size:6.2px;color:#4a4a4a;font-weight:400;font-family:'Liberation Sans',sans-serif;transform:scaleX(0.8600);transform-origin:right center;">16,574,911</div>
<div class="r" style="left:455px;top:273px;width:41px;height:8px;background:#fff;"></div>
<div class="t" style="right:466.1px;text-align:right;top:267.0px;font-size:6.2px;color:#4a4a4a;font-weight:400;font-family:'Liberation Sans',sans-serif;transform:scaleX(0.8600);transform-origin:right center;">16,855,732</div>
<div class="r" style="left:498px;top:273px;width:41px;height:8px;background:#fff;"></div>
<div class="t" style="right:423.1px;text-align:right;top:267.0px;font-size:6.2px;color:#4a4a4a;font-weight:400;font-family:'Liberation Sans',sans-serif;transform:scaleX(0.8600);transform-origin:right center;">16,513,117</div>
<div class="r" style="left:541px;top:273px;width:41px;height:8px;background:#fff;"></div>
<div class="t" style="right:380.1px;text-align:right;top:267.0px;font-size:6.2px;color:#4a4a4a;font-weight:400;font-family:'Liberation Sans',sans-serif;transform:scaleX(0.8600);transform-origin:right center;">15,923,294</div>
<div class="r" style="left:584px;top:273px;width:41px;height:8px;background:#fff;"></div>
<div class="t" style="right:337.1px;text-align:right;top:267.0px;font-size:6.2px;color:#4a4a4a;font-weight:400;font-family:'Liberation Sans',sans-serif;transform:scaleX(0.8600);transform-origin:right center;">15,585,985</div>
<div class="r" style="left:627px;top:273px;width:41px;height:8px;background:#fff;"></div>
<div class="t" style="right:294.1px;text-align:right;top:267.0px;font-size:6.2px;color:#4a4a4a;font-weight:400;font-family:'Liberation Sans',sans-serif;transform:scaleX(0.8600);transform-origin:right center;">15,121,800</div>
<div class="r" style="left:670px;top:273px;width:41px;height:8px;background:#fff;"></div>
<div class="t" style="right:251.10000000000002px;text-align:right;top:267.0px;font-size:6.2px;color:#4a4a4a;font-weight:400;font-family:'Liberation Sans',sans-serif;transform:scaleX(0.8600);transform-origin:right center;">16,187,355</div>
<div class="r" style="left:713px;top:273px;width:41px;height:8px;background:#d9d9d9;"></div>
<div class="t" style="right:208.60000000000002px;text-align:right;top:267.0px;font-size:6.2px;color:#3e3e3e;font-weight:700;font-family:'Liberation Sans',sans-serif;transform:scaleX(0.8530);transform-origin:right center;">201,825,875</div>
<div class="r" style="left:771.296px;top:273px;width:0.304px;height:8px;background:#e0868f;"></div>
<svg class="r" style="left:771px;top:273px;" width="1" height="8" viewBox="0 0 1 8"><path d="M0.5 0V8" stroke="#7a7a7a" stroke-width="0.9" stroke-dasharray="1.1 0.9"/></svg>
<div class="t" style="right:172.70000000000005px;text-align:right;top:267.0px;font-size:6.2px;color:#777;font-weight:400;font-family:'Liberation Sans',sans-serif;transform:scaleX(0.8600);transform-origin:right center;">-1.9%</div>
<div class="r" style="left:28px;top:281.7px;width:125px;height:1px;background:#fcfcfc;"></div>
<div class="t" style="left:41.9px;top:276.9px;font-size:5.9px;color:#4a4a4a;font-weight:400;font-family:'Liberation Sans',sans-serif;transform:scaleX(0.9858);transform-origin:left center;">[*] 1000 (Cash and Cash Equivalent)</div>
<div class="r" style="left:154px;top:283px;width:41px;height:8px;background:#d9d9d9;"></div>
<div class="t" style="right:767.6px;text-align:right;top:277.0px;font-size:6.2px;color:#3e3e3e;font-weight:700;font-family:'Liberation Sans',sans-serif;transform:scaleX(0.8530);transform-origin:right center;">139,978,355</div>
<div class="r" style="left:197px;top:283px;width:41px;height:8px;background:#fff;"></div>
<div class="t" style="right:724.1px;text-align:right;top:277.0px;font-size:6.2px;color:#4a4a4a;font-weight:400;font-family:'Liberation Sans',sans-serif;transform:scaleX(0.8600);transform-origin:right center;">11,151,223</div>
<div class="r" style="left:240px;top:283px;width:41px;height:8px;background:#fff;"></div>
<div class="t" style="right:681.1px;text-align:right;top:277.0px;font-size:6.2px;color:#4a4a4a;font-weight:400;font-family:'Liberation Sans',sans-serif;transform:scaleX(0.8600);transform-origin:right center;">12,161,879</div>
<div class="r" style="left:283px;top:283px;width:41px;height:8px;background:#fff;"></div>
<div class="t" style="right:638.1px;text-align:right;top:277.0px;font-size:6.2px;color:#4a4a4a;font-weight:400;font-family:'Liberation Sans',sans-serif;transform:scaleX(0.8600);transform-origin:right center;">11,146,871</div>
<div class="r" style="left:326px;top:283px;width:41px;height:8px;background:#fff;"></div>
<div class="t" style="right:595.1px;text-align:right;top:277.0px;font-size:6.2px;color:#4a4a4a;font-weight:400;font-family:'Liberation Sans',sans-serif;transform:scaleX(0.8600);transform-origin:right center;">11,620,546</div>
<div class="r" style="left:369px;top:283px;width:41px;height:8px;background:#fff;"></div>
<div class="t" style="right:552.1px;text-align:right;top:277.0px;font-size:6.2px;color:#4a4a4a;font-weight:400;font-family:'Liberation Sans',sans-serif;transform:scaleX(0.8600);transform-origin:right center;">12,710,381</div>
<div class="r" style="left:412px;top:283px;width:41px;height:8px;background:#fff;"></div>
<div class="t" style="right:509.1px;text-align:right;top:277.0px;font-size:6.2px;color:#4a4a4a;font-weight:400;font-family:'Liberation Sans',sans-serif;transform:scaleX(0.8600);transform-origin:right center;">11,288,626</div>
<div class="r" style="left:455px;top:283px;width:41px;height:8px;background:#fff;"></div>
<div class="t" style="right:466.1px;text-align:right;top:277.0px;font-size:6.2px;color:#4a4a4a;font-weight:400;font-family:'Liberation Sans',sans-serif;transform:scaleX(0.8600);transform-origin:right center;">10,669,099</div>
<div class="r" style="left:498px;top:283px;width:41px;height:8px;background:#fff;"></div>
<div class="t" style="right:423.1px;text-align:right;top:277.0px;font-size:6.2px;color:#4a4a4a;font-weight:400;font-family:'Liberation Sans',sans-serif;transform:scaleX(0.8600);transform-origin:right center;">10,552,201</div>
<div class="r" style="left:541px;top:283px;width:41px;height:8px;background:#fff;"></div>
<div class="t" style="right:380.1px;text-align:right;top:277.0px;font-size:6.2px;color:#4a4a4a;font-weight:400;font-family:'Liberation Sans',sans-serif;transform:scaleX(0.8600);transform-origin:right center;">8,942,955</div>
<div class="r" style="left:584px;top:283px;width:41px;height:8px;background:#fff;"></div>
<div class="t" style="right:337.1px;text-align:right;top:277.0px;font-size:6.2px;color:#4a4a4a;font-weight:400;font-family:'Liberation Sans',sans-serif;transform:scaleX(0.8600);transform-origin:right center;">9,168,212</div>
<div class="r" style="left:627px;top:283px;width:41px;height:8px;background:#fff;"></div>
<div class="t" style="right:294.1px;text-align:right;top:277.0px;font-size:6.2px;color:#4a4a4a;font-weight:400;font-family:'Liberation Sans',sans-serif;transform:scaleX(0.8600);transform-origin:right center;">9,088,120</div>
<div class="r" style="left:670px;top:283px;width:41px;height:8px;background:#fff;"></div>
<div class="t" style="right:251.10000000000002px;text-align:right;top:277.0px;font-size:6.2px;color:#4a4a4a;font-weight:400;font-family:'Liberation Sans',sans-serif;transform:scaleX(0.8600);transform-origin:right center;">9,391,044</div>
<div class="r" style="left:713px;top:283px;width:41px;height:8px;background:#d9d9d9;"></div>
<div class="t" style="right:208.60000000000002px;text-align:right;top:277.0px;font-size:6.2px;color:#3e3e3e;font-weight:700;font-family:'Liberation Sans',sans-serif;transform:scaleX(0.8530);transform-origin:right center;">127,891,159</div>
<div class="r" style="left:770.224px;top:283px;width:1.376px;height:8px;background:#e0868f;"></div>
<svg class="r" style="left:771px;top:283px;" width="1" height="8" viewBox="0 0 1 8"><path d="M0.5 0V8" stroke="#7a7a7a" stroke-width="0.9" stroke-dasharray="1.1 0.9"/></svg>
<div class="t" style="right:172.70000000000005px;text-align:right;top:277.0px;font-size:6.2px;color:#777;font-weight:400;font-family:'Liberation Sans',sans-serif;transform:scaleX(0.8600);transform-origin:right center;">-8.6%</div>
<div class="r" style="left:28px;top:291.7px;width:125px;height:1px;background:#fcfcfc;"></div>
<div class="t" style="left:41.9px;top:286.9px;font-size:5.9px;color:#4a4a4a;font-weight:400;font-family:'Liberation Sans',sans-serif;transform:scaleX(1.0143);transform-origin:left center;">[*] 1100 (Trade Retail)</div>
<div class="r" style="left:154px;top:293px;width:41px;height:8px;background:#d9d9d9;"></div>
<div class="t" style="right:767.6px;text-align:right;top:287.0px;font-size:6.2px;color:#3e3e3e;font-weight:700;font-family:'Liberation Sans',sans-serif;transform:scaleX(0.8530);transform-origin:right center;">36,433,684</div>
<div class="r" style="left:197px;top:293px;width:41px;height:8px;background:#fff;"></div>
<div class="t" style="right:724.1px;text-align:right;top:287.0px;font-size:6.2px;color:#4a4a4a;font-weight:400;font-family:'Liberation Sans',sans-serif;transform:scaleX(0.8600);transform-origin:right center;">3,421,493</div>
<div class="r" style="left:240px;top:293px;width:41px;height:8px;background:#fff;"></div>
<div class="t" style="right:681.1px;text-align:right;top:287.0px;font-size:6.2px;color:#4a4a4a;font-weight:400;font-family:'Liberation Sans',sans-serif;transform:scaleX(0.8600);transform-origin:right center;">3,549,672</div>
<div class="r" style="left:283px;top:293px;width:41px;height:8px;background:#fff;"></div>
<div class="t" style="right:638.1px;text-align:right;top:287.0px;font-size:6.2px;color:#4a4a4a;font-weight:400;font-family:'Liberation Sans',sans-serif;transform:scaleX(0.8600);transform-origin:right center;">3,352,324</div>
<div class="r" style="left:326px;top:293px;width:41px;height:8px;background:#fff;"></div>
<div class="t" style="right:595.1px;text-align:right;top:287.0px;font-size:6.2px;color:#4a4a4a;font-weight:400;font-family:'Liberation Sans',sans-serif;transform:scaleX(0.8600);transform-origin:right center;">3,425,006</div>
<div class="r" style="left:369px;top:293px;width:41px;height:8px;background:#fff;"></div>
<div class="t" style="right:552.1px;text-align:right;top:287.0px;font-size:6.2px;color:#4a4a4a;font-weight:400;font-family:'Liberation Sans',sans-serif;transform:scaleX(0.8600);transform-origin:right center;">3,076,770</div>
<div class="r" style="left:412px;top:293px;width:41px;height:8px;background:#fff;"></div>
<div class="t" style="right:509.1px;text-align:right;top:287.0px;font-size:6.2px;color:#4a4a4a;font-weight:400;font-family:'Liberation Sans',sans-serif;transform:scaleX(0.8600);transform-origin:right center;">2,955,460</div>
<div class="r" style="left:455px;top:293px;width:41px;height:8px;background:#fff;"></div>
<div class="t" style="right:466.1px;text-align:right;top:287.0px;font-size:6.2px;color:#4a4a4a;font-weight:400;font-family:'Liberation Sans',sans-serif;transform:scaleX(0.8600);transform-origin:right center;">3,398,090</div>
<div class="r" style="left:498px;top:293px;width:41px;height:8px;background:#fff;"></div>
<div class="t" style="right:423.1px;text-align:right;top:287.0px;font-size:6.2px;color:#4a4a4a;font-weight:400;font-family:'Liberation Sans',sans-serif;transform:scaleX(0.8600);transform-origin:right center;">3,271,475</div>
<div class="r" style="left:541px;top:293px;width:41px;height:8px;background:#fff;"></div>
<div class="t" style="right:380.1px;text-align:right;top:287.0px;font-size:6.2px;color:#4a4a4a;font-weight:400;font-family:'Liberation Sans',sans-serif;transform:scaleX(0.8600);transform-origin:right center;">3,872,538</div>
<div class="r" style="left:584px;top:293px;width:41px;height:8px;background:#fff;"></div>
<div class="t" style="right:337.1px;text-align:right;top:287.0px;font-size:6.2px;color:#4a4a4a;font-weight:400;font-family:'Liberation Sans',sans-serif;transform:scaleX(0.8600);transform-origin:right center;">3,512,777</div>
<div class="r" style="left:627px;top:293px;width:41px;height:8px;background:#fff;"></div>
<div class="t" style="right:294.1px;text-align:right;top:287.0px;font-size:6.2px;color:#4a4a4a;font-weight:400;font-family:'Liberation Sans',sans-serif;transform:scaleX(0.8600);transform-origin:right center;">3,346,137</div>
<div class="r" style="left:670px;top:293px;width:41px;height:8px;background:#fff;"></div>
<div class="t" style="right:251.10000000000002px;text-align:right;top:287.0px;font-size:6.2px;color:#4a4a4a;font-weight:400;font-family:'Liberation Sans',sans-serif;transform:scaleX(0.8600);transform-origin:right center;">3,714,357</div>
<div class="r" style="left:713px;top:293px;width:41px;height:8px;background:#d9d9d9;"></div>
<div class="t" style="right:208.60000000000002px;text-align:right;top:287.0px;font-size:6.2px;color:#3e3e3e;font-weight:700;font-family:'Liberation Sans',sans-serif;transform:scaleX(0.8530);transform-origin:right center;">40,895,500</div>
<div class="r" style="left:771.8px;top:293px;width:1.3px;height:8px;background:#8c8c8c;"></div>
<svg class="r" style="left:771px;top:293px;" width="1" height="8" viewBox="0 0 1 8"><path d="M0.5 0V8" stroke="#7a7a7a" stroke-width="0.9" stroke-dasharray="1.1 0.9"/></svg>
<div class="t" style="right:172.70000000000005px;text-align:right;top:287.0px;font-size:6.2px;color:#777;font-weight:400;font-family:'Liberation Sans',sans-serif;transform:scaleX(0.8600);transform-origin:right center;">12.2%</div>
<div class="r" style="left:28px;top:301.7px;width:125px;height:1px;background:#fcfcfc;"></div>
<div class="t" style="left:41.9px;top:296.9px;font-size:5.9px;color:#4a4a4a;font-weight:400;font-family:'Liberation Sans',sans-serif;transform:scaleX(1.0208);transform-origin:left center;">[*] 1110 (Other Trade)</div>
<div class="r" style="left:154px;top:303px;width:41px;height:8px;background:#d9d9d9;"></div>
<div class="t" style="right:767.6px;text-align:right;top:297.0px;font-size:6.2px;color:#3e3e3e;font-weight:700;font-family:'Liberation Sans',sans-serif;transform:scaleX(0.8530);transform-origin:right center;">240,000</div>
<div class="r" style="left:197px;top:303px;width:41px;height:8px;background:#fff;"></div>
<div class="t" style="right:724.1px;text-align:right;top:297.0px;font-size:6.2px;color:#4a4a4a;font-weight:400;font-family:'Liberation Sans',sans-serif;transform:scaleX(0.8600);transform-origin:right center;">20,000</div>
<div class="r" style="left:240px;top:303px;width:41px;height:8px;background:#fff;"></div>
<div class="t" style="right:681.1px;text-align:right;top:297.0px;font-size:6.2px;color:#4a4a4a;font-weight:400;font-family:'Liberation Sans',sans-serif;transform:scaleX(0.8600);transform-origin:right center;">20,000</div>
<div class="r" style="left:283px;top:303px;width:41px;height:8px;background:#fff;"></div>
<div class="t" style="right:638.1px;text-align:right;top:297.0px;font-size:6.2px;color:#4a4a4a;font-weight:400;font-family:'Liberation Sans',sans-serif;transform:scaleX(0.8600);transform-origin:right center;">20,000</div>
<div class="r" style="left:326px;top:303px;width:41px;height:8px;background:#fff;"></div>
<div class="t" style="right:595.1px;text-align:right;top:297.0px;font-size:6.2px;color:#4a4a4a;font-weight:400;font-family:'Liberation Sans',sans-serif;transform:scaleX(0.8600);transform-origin:right center;">20,000</div>
<div class="r" style="left:369px;top:303px;width:41px;height:8px;background:#fff;"></div>
<div class="t" style="right:552.1px;text-align:right;top:297.0px;font-size:6.2px;color:#4a4a4a;font-weight:400;font-family:'Liberation Sans',sans-serif;transform:scaleX(0.8600);transform-origin:right center;">20,000</div>
<div class="r" style="left:412px;top:303px;width:41px;height:8px;background:#fff;"></div>
<div class="t" style="right:509.1px;text-align:right;top:297.0px;font-size:6.2px;color:#4a4a4a;font-weight:400;font-family:'Liberation Sans',sans-serif;transform:scaleX(0.8600);transform-origin:right center;">20,000</div>
<div class="r" style="left:455px;top:303px;width:41px;height:8px;background:#fff;"></div>
<div class="t" style="right:466.1px;text-align:right;top:297.0px;font-size:6.2px;color:#4a4a4a;font-weight:400;font-family:'Liberation Sans',sans-serif;transform:scaleX(0.8600);transform-origin:right center;">20,000</div>
<div class="r" style="left:498px;top:303px;width:41px;height:8px;background:#fff;"></div>
<div class="t" style="right:423.1px;text-align:right;top:297.0px;font-size:6.2px;color:#4a4a4a;font-weight:400;font-family:'Liberation Sans',sans-serif;transform:scaleX(0.8600);transform-origin:right center;">20,000</div>
<div class="r" style="left:541px;top:303px;width:41px;height:8px;background:#fff;"></div>
<div class="t" style="right:380.1px;text-align:right;top:297.0px;font-size:6.2px;color:#4a4a4a;font-weight:400;font-family:'Liberation Sans',sans-serif;transform:scaleX(0.8600);transform-origin:right center;">20,000</div>
<div class="r" style="left:584px;top:303px;width:41px;height:8px;background:#fff;"></div>
<div class="t" style="right:337.1px;text-align:right;top:297.0px;font-size:6.2px;color:#4a4a4a;font-weight:400;font-family:'Liberation Sans',sans-serif;transform:scaleX(0.8600);transform-origin:right center;">20,000</div>
<div class="r" style="left:627px;top:303px;width:41px;height:8px;background:#fff;"></div>
<div class="t" style="right:294.1px;text-align:right;top:297.0px;font-size:6.2px;color:#4a4a4a;font-weight:400;font-family:'Liberation Sans',sans-serif;transform:scaleX(0.8600);transform-origin:right center;">20,000</div>
<div class="r" style="left:670px;top:303px;width:41px;height:8px;background:#fff;"></div>
<div class="t" style="right:251.10000000000002px;text-align:right;top:297.0px;font-size:6.2px;color:#4a4a4a;font-weight:400;font-family:'Liberation Sans',sans-serif;transform:scaleX(0.8600);transform-origin:right center;">20,000</div>
<div class="r" style="left:713px;top:303px;width:41px;height:8px;background:#d9d9d9;"></div>
<div class="t" style="right:208.60000000000002px;text-align:right;top:297.0px;font-size:6.2px;color:#3e3e3e;font-weight:700;font-family:'Liberation Sans',sans-serif;transform:scaleX(0.8530);transform-origin:right center;">240,000</div>
<svg class="r" style="left:771px;top:303px;" width="1" height="8" viewBox="0 0 1 8"><path d="M0.5 0V8" stroke="#7a7a7a" stroke-width="0.9" stroke-dasharray="1.1 0.9"/></svg>
<div class="t" style="right:172.70000000000005px;text-align:right;top:297.0px;font-size:6.2px;color:#777;font-weight:400;font-family:'Liberation Sans',sans-serif;transform:scaleX(0.8600);transform-origin:right center;">0.0%</div>
<div class="r" style="left:28px;top:311.7px;width:125px;height:1px;background:#fcfcfc;"></div>
<div class="t" style="left:41.9px;top:306.9px;font-size:5.9px;color:#4a4a4a;font-weight:400;font-family:'Liberation Sans',sans-serif;transform:scaleX(1.0243);transform-origin:left center;">[*] 1200 (Inventory)</div>
<div class="r" style="left:154px;top:313px;width:41px;height:8px;background:#d9d9d9;"></div>
<div class="t" style="right:767.6px;text-align:right;top:307.0px;font-size:6.2px;color:#3e3e3e;font-weight:700;font-family:'Liberation Sans',sans-serif;transform:scaleX(0.8530);transform-origin:right center;">28,996,804</div>
<div class="r" style="left:197px;top:313px;width:41px;height:8px;background:#fff;"></div>
<div class="t" style="right:724.1px;text-align:right;top:307.0px;font-size:6.2px;color:#4a4a4a;font-weight:400;font-family:'Liberation Sans',sans-serif;transform:scaleX(0.8600);transform-origin:right center;">2,761,371</div>
<div class="r" style="left:240px;top:313px;width:41px;height:8px;background:#fff;"></div>
<div class="t" style="right:681.1px;text-align:right;top:307.0px;font-size:6.2px;color:#4a4a4a;font-weight:400;font-family:'Liberation Sans',sans-serif;transform:scaleX(0.8600);transform-origin:right center;">2,682,580</div>
<div class="r" style="left:283px;top:313px;width:41px;height:8px;background:#fff;"></div>
<div class="t" style="right:638.1px;text-align:right;top:307.0px;font-size:6.2px;color:#4a4a4a;font-weight:400;font-family:'Liberation Sans',sans-serif;transform:scaleX(0.8600);transform-origin:right center;">2,716,610</div>
<div class="r" style="left:326px;top:313px;width:41px;height:8px;background:#fff;"></div>
<div class="t" style="right:595.1px;text-align:right;top:307.0px;font-size:6.2px;color:#4a4a4a;font-weight:400;font-family:'Liberation Sans',sans-serif;transform:scaleX(0.8600);transform-origin:right center;">2,672,868</div>
<div class="r" style="left:369px;top:313px;width:41px;height:8px;background:#fff;"></div>
<div class="t" style="right:552.1px;text-align:right;top:307.0px;font-size:6.2px;color:#4a4a4a;font-weight:400;font-family:'Liberation Sans',sans-serif;transform:scaleX(0.8600);transform-origin:right center;">2,483,496</div>
<div class="r" style="left:412px;top:313px;width:41px;height:8px;background:#fff;"></div>
<div class="t" style="right:509.1px;text-align:right;top:307.0px;font-size:6.2px;color:#4a4a4a;font-weight:400;font-family:'Liberation Sans',sans-serif;transform:scaleX(0.8600);transform-origin:right center;">2,304,585</div>
<div class="r" style="left:455px;top:313px;width:41px;height:8px;background:#fff;"></div>
<div class="t" style="right:466.1px;text-align:right;top:307.0px;font-size:6.2px;color:#4a4a4a;font-weight:400;font-family:'Liberation Sans',sans-serif;transform:scaleX(0.8600);transform-origin:right center;">2,762,305</div>
<div class="r" style="left:498px;top:313px;width:41px;height:8px;background:#fff;"></div>
<div class="t" style="right:423.1px;text-align:right;top:307.0px;font-size:6.2px;color:#4a4a4a;font-weight:400;font-family:'Liberation Sans',sans-serif;transform:scaleX(0.8600);transform-origin:right center;">2,663,204</div>
<div class="r" style="left:541px;top:313px;width:41px;height:8px;background:#fff;"></div>
<div class="t" style="right:380.1px;text-align:right;top:307.0px;font-size:6.2px;color:#4a4a4a;font-weight:400;font-family:'Liberation Sans',sans-serif;transform:scaleX(0.8600);transform-origin:right center;">3,081,562</div>
<div class="r" style="left:584px;top:313px;width:41px;height:8px;background:#fff;"></div>
<div class="t" style="right:337.1px;text-align:right;top:307.0px;font-size:6.2px;color:#4a4a4a;font-weight:400;font-family:'Liberation Sans',sans-serif;transform:scaleX(0.8600);transform-origin:right center;">2,878,758</div>
<div class="r" style="left:627px;top:313px;width:41px;height:8px;background:#fff;"></div>
<div class="t" style="right:294.1px;text-align:right;top:307.0px;font-size:6.2px;color:#4a4a4a;font-weight:400;font-family:'Liberation Sans',sans-serif;transform:scaleX(0.8600);transform-origin:right center;">2,661,475</div>
<div class="r" style="left:670px;top:313px;width:41px;height:8px;background:#fff;"></div>
<div class="t" style="right:251.10000000000002px;text-align:right;top:307.0px;font-size:6.2px;color:#4a4a4a;font-weight:400;font-family:'Liberation Sans',sans-serif;transform:scaleX(0.8600);transform-origin:right center;">3,055,886</div>
<div class="r" style="left:713px;top:313px;width:41px;height:8px;background:#d9d9d9;"></div>
<div class="t" style="right:208.60000000000002px;text-align:right;top:307.0px;font-size:6.2px;color:#3e3e3e;font-weight:700;font-family:'Liberation Sans',sans-serif;transform:scaleX(0.8530);transform-origin:right center;">32,724,700</div>
<div class="r" style="left:771.8px;top:313px;width:1.3px;height:8px;background:#8c8c8c;"></div>
<svg class="r" style="left:771px;top:313px;" width="1" height="8" viewBox="0 0 1 8"><path d="M0.5 0V8" stroke="#7a7a7a" stroke-width="0.9" stroke-dasharray="1.1 0.9"/></svg>
<div class="t" style="right:172.70000000000005px;text-align:right;top:307.0px;font-size:6.2px;color:#777;font-weight:400;font-family:'Liberation Sans',sans-serif;transform:scaleX(0.8600);transform-origin:right center;">12.9%</div>
<div class="r" style="left:28px;top:321.7px;width:125px;height:1px;background:#fcfcfc;"></div>
<div class="t" style="left:41.9px;top:316.9px;font-size:5.9px;color:#4a4a4a;font-weight:400;font-family:'Liberation Sans',sans-serif;transform:scaleX(1.0129);transform-origin:left center;">[*] 1300 (Short Term Loans)</div>
<div class="r" style="left:154px;top:323px;width:41px;height:8px;background:#d9d9d9;"></div>
<div class="t" style="right:767.6px;text-align:right;top:317.0px;font-size:6.2px;color:#3e3e3e;font-weight:700;font-family:'Liberation Sans',sans-serif;transform:scaleX(0.8530);transform-origin:right center;">34,200</div>
<div class="r" style="left:197px;top:323px;width:41px;height:8px;background:#fff;"></div>
<div class="t" style="right:724.1px;text-align:right;top:317.0px;font-size:6.2px;color:#4a4a4a;font-weight:400;font-family:'Liberation Sans',sans-serif;transform:scaleX(0.8600);transform-origin:right center;">2,850</div>
<div class="r" style="left:240px;top:323px;width:41px;height:8px;background:#fff;"></div>
<div class="t" style="right:681.1px;text-align:right;top:317.0px;font-size:6.2px;color:#4a4a4a;font-weight:400;font-family:'Liberation Sans',sans-serif;transform:scaleX(0.8600);transform-origin:right center;">2,850</div>
<div class="r" style="left:283px;top:323px;width:41px;height:8px;background:#fff;"></div>
<div class="t" style="right:638.1px;text-align:right;top:317.0px;font-size:6.2px;color:#4a4a4a;font-weight:400;font-family:'Liberation Sans',sans-serif;transform:scaleX(0.8600);transform-origin:right center;">2,850</div>
<div class="r" style="left:326px;top:323px;width:41px;height:8px;background:#fff;"></div>
<div class="t" style="right:595.1px;text-align:right;top:317.0px;font-size:6.2px;color:#4a4a4a;font-weight:400;font-family:'Liberation Sans',sans-serif;transform:scaleX(0.8600);transform-origin:right center;">2,850</div>
<div class="r" style="left:369px;top:323px;width:41px;height:8px;background:#fff;"></div>
<div class="t" style="right:552.1px;text-align:right;top:317.0px;font-size:6.2px;color:#4a4a4a;font-weight:400;font-family:'Liberation Sans',sans-serif;transform:scaleX(0.8600);transform-origin:right center;">2,850</div>
<div class="r" style="left:412px;top:323px;width:41px;height:8px;background:#fff;"></div>
<div class="t" style="right:509.1px;text-align:right;top:317.0px;font-size:6.2px;color:#4a4a4a;font-weight:400;font-family:'Liberation Sans',sans-serif;transform:scaleX(0.8600);transform-origin:right center;">2,850</div>
<div class="r" style="left:455px;top:323px;width:41px;height:8px;background:#fff;"></div>
<div class="t" style="right:466.1px;text-align:right;top:317.0px;font-size:6.2px;color:#4a4a4a;font-weight:400;font-family:'Liberation Sans',sans-serif;transform:scaleX(0.8600);transform-origin:right center;">2,850</div>
<div class="r" style="left:498px;top:323px;width:41px;height:8px;background:#fff;"></div>
<div class="t" style="right:423.1px;text-align:right;top:317.0px;font-size:6.2px;color:#4a4a4a;font-weight:400;font-family:'Liberation Sans',sans-serif;transform:scaleX(0.8600);transform-origin:right center;">2,850</div>
<div class="r" style="left:541px;top:323px;width:41px;height:8px;background:#fff;"></div>
<div class="t" style="right:380.1px;text-align:right;top:317.0px;font-size:6.2px;color:#4a4a4a;font-weight:400;font-family:'Liberation Sans',sans-serif;transform:scaleX(0.8600);transform-origin:right center;">2,850</div>
<div class="r" style="left:584px;top:323px;width:41px;height:8px;background:#fff;"></div>
<div class="t" style="right:337.1px;text-align:right;top:317.0px;font-size:6.2px;color:#4a4a4a;font-weight:400;font-family:'Liberation Sans',sans-serif;transform:scaleX(0.8600);transform-origin:right center;">2,850</div>
<div class="r" style="left:627px;top:323px;width:41px;height:8px;background:#fff;"></div>
<div class="t" style="right:294.1px;text-align:right;top:317.0px;font-size:6.2px;color:#4a4a4a;font-weight:400;font-family:'Liberation Sans',sans-serif;transform:scaleX(0.8600);transform-origin:right center;">2,850</div>
<div class="r" style="left:670px;top:323px;width:41px;height:8px;background:#fff;"></div>
<div class="t" style="right:251.10000000000002px;text-align:right;top:317.0px;font-size:6.2px;color:#4a4a4a;font-weight:400;font-family:'Liberation Sans',sans-serif;transform:scaleX(0.8600);transform-origin:right center;">2,850</div>
<div class="r" style="left:713px;top:323px;width:41px;height:8px;background:#d9d9d9;"></div>
<div class="t" style="right:208.60000000000002px;text-align:right;top:317.0px;font-size:6.2px;color:#3e3e3e;font-weight:700;font-family:'Liberation Sans',sans-serif;transform:scaleX(0.8530);transform-origin:right center;">34,200</div>
<svg class="r" style="left:771px;top:323px;" width="1" height="8" viewBox="0 0 1 8"><path d="M0.5 0V8" stroke="#7a7a7a" stroke-width="0.9" stroke-dasharray="1.1 0.9"/></svg>
<div class="t" style="right:172.70000000000005px;text-align:right;top:317.0px;font-size:6.2px;color:#777;font-weight:400;font-family:'Liberation Sans',sans-serif;transform:scaleX(0.8600);transform-origin:right center;">0.0%</div>
<div class="r" style="left:28px;top:331.7px;width:125px;height:1px;background:#fcfcfc;"></div>
<div class="t" style="left:41.9px;top:326.9px;font-size:5.9px;color:#4a4a4a;font-weight:400;font-family:'Liberation Sans',sans-serif;transform:scaleX(0.9931);transform-origin:left center;">[*] 1400 (Prepaid Expenses)</div>
<div class="r" style="left:154px;top:333px;width:41px;height:8px;background:#d9d9d9;"></div>
<div class="t" style="right:767.6px;text-align:right;top:327.0px;font-size:6.2px;color:#3e3e3e;font-weight:700;font-family:'Liberation Sans',sans-serif;transform:scaleX(0.8530);transform-origin:right center;">25,440</div>
<div class="r" style="left:197px;top:333px;width:41px;height:8px;background:#fff;"></div>
<div class="t" style="right:724.1px;text-align:right;top:327.0px;font-size:6.2px;color:#4a4a4a;font-weight:400;font-family:'Liberation Sans',sans-serif;transform:scaleX(0.8600);transform-origin:right center;">2,120</div>
<div class="r" style="left:240px;top:333px;width:41px;height:8px;background:#fff;"></div>
<div class="t" style="right:681.1px;text-align:right;top:327.0px;font-size:6.2px;color:#4a4a4a;font-weight:400;font-family:'Liberation Sans',sans-serif;transform:scaleX(0.8600);transform-origin:right center;">2,120</div>
<div class="r" style="left:283px;top:333px;width:41px;height:8px;background:#fff;"></div>
<div class="t" style="right:638.1px;text-align:right;top:327.0px;font-size:6.2px;color:#4a4a4a;font-weight:400;font-family:'Liberation Sans',sans-serif;transform:scaleX(0.8600);transform-origin:right center;">2,120</div>
<div class="r" style="left:326px;top:333px;width:41px;height:8px;background:#fff;"></div>
<div class="t" style="right:595.1px;text-align:right;top:327.0px;font-size:6.2px;color:#4a4a4a;font-weight:400;font-family:'Liberation Sans',sans-serif;transform:scaleX(0.8600);transform-origin:right center;">2,120</div>
<div class="r" style="left:369px;top:333px;width:41px;height:8px;background:#fff;"></div>
<div class="t" style="right:552.1px;text-align:right;top:327.0px;font-size:6.2px;color:#4a4a4a;font-weight:400;font-family:'Liberation Sans',sans-serif;transform:scaleX(0.8600);transform-origin:right center;">2,120</div>
<div class="r" style="left:412px;top:333px;width:41px;height:8px;background:#fff;"></div>
<div class="t" style="right:509.1px;text-align:right;top:327.0px;font-size:6.2px;color:#4a4a4a;font-weight:400;font-family:'Liberation Sans',sans-serif;transform:scaleX(0.8600);transform-origin:right center;">2,120</div>
<div class="r" style="left:455px;top:333px;width:41px;height:8px;background:#fff;"></div>
<div class="t" style="right:466.1px;text-align:right;top:327.0px;font-size:6.2px;color:#4a4a4a;font-weight:400;font-family:'Liberation Sans',sans-serif;transform:scaleX(0.8600);transform-origin:right center;">2,120</div>
<div class="r" style="left:498px;top:333px;width:41px;height:8px;background:#fff;"></div>
<div class="t" style="right:423.1px;text-align:right;top:327.0px;font-size:6.2px;color:#4a4a4a;font-weight:400;font-family:'Liberation Sans',sans-serif;transform:scaleX(0.8600);transform-origin:right center;">2,120</div>
<div class="r" style="left:541px;top:333px;width:41px;height:8px;background:#fff;"></div>
<div class="t" style="right:380.1px;text-align:right;top:327.0px;font-size:6.2px;color:#4a4a4a;font-weight:400;font-family:'Liberation Sans',sans-serif;transform:scaleX(0.8600);transform-origin:right center;">2,120</div>
<div class="r" style="left:584px;top:333px;width:41px;height:8px;background:#fff;"></div>
<div class="t" style="right:337.1px;text-align:right;top:327.0px;font-size:6.2px;color:#4a4a4a;font-weight:400;font-family:'Liberation Sans',sans-serif;transform:scaleX(0.8600);transform-origin:right center;">2,120</div>
<div class="r" style="left:627px;top:333px;width:41px;height:8px;background:#fff;"></div>
<div class="t" style="right:294.1px;text-align:right;top:327.0px;font-size:6.2px;color:#4a4a4a;font-weight:400;font-family:'Liberation Sans',sans-serif;transform:scaleX(0.8600);transform-origin:right center;">1,950</div>
<div class="r" style="left:670px;top:333px;width:41px;height:8px;background:#fff;"></div>
<div class="t" style="right:251.10000000000002px;text-align:right;top:327.0px;font-size:6.2px;color:#4a4a4a;font-weight:400;font-family:'Liberation Sans',sans-serif;transform:scaleX(0.8600);transform-origin:right center;">1,950</div>
<div class="r" style="left:713px;top:333px;width:41px;height:8px;background:#d9d9d9;"></div>
<div class="t" style="right:208.60000000000002px;text-align:right;top:327.0px;font-size:6.2px;color:#3e3e3e;font-weight:700;font-family:'Liberation Sans',sans-serif;transform:scaleX(0.8530);transform-origin:right center;">25,100</div>
<div class="r" style="left:771.3000000000001px;top:333px;width:0.3px;height:8px;background:#e0868f;"></div>
<svg class="r" style="left:771px;top:333px;" width="1" height="8" viewBox="0 0 1 8"><path d="M0.5 0V8" stroke="#7a7a7a" stroke-width="0.9" stroke-dasharray="1.1 0.9"/></svg>
<div class="t" style="right:172.70000000000005px;text-align:right;top:327.0px;font-size:6.2px;color:#777;font-weight:400;font-family:'Liberation Sans',sans-serif;transform:scaleX(0.8600);transform-origin:right center;">-1.3%</div>
<div class="r" style="left:28px;top:341.7px;width:125px;height:1px;background:#fcfcfc;"></div>
<div class="t" style="left:41.9px;top:336.9px;font-size:5.9px;color:#4a4a4a;font-weight:400;font-family:'Liberation Sans',sans-serif;transform:scaleX(1.0049);transform-origin:left center;">[*] 1500 (Other Current Assets)</div>
<div class="r" style="left:154px;top:343px;width:41px;height:8px;background:#d9d9d9;"></div>
<div class="t" style="right:767.6px;text-align:right;top:337.0px;font-size:6.2px;color:#3e3e3e;font-weight:700;font-family:'Liberation Sans',sans-serif;transform:scaleX(0.8530);transform-origin:right center;">15,216</div>
<div class="r" style="left:197px;top:343px;width:41px;height:8px;background:#fff;"></div>
<div class="t" style="right:724.1px;text-align:right;top:337.0px;font-size:6.2px;color:#4a4a4a;font-weight:400;font-family:'Liberation Sans',sans-serif;transform:scaleX(0.8600);transform-origin:right center;">1,268</div>
<div class="r" style="left:240px;top:343px;width:41px;height:8px;background:#fff;"></div>
<div class="t" style="right:681.1px;text-align:right;top:337.0px;font-size:6.2px;color:#4a4a4a;font-weight:400;font-family:'Liberation Sans',sans-serif;transform:scaleX(0.8600);transform-origin:right center;">1,268</div>
<div class="r" style="left:283px;top:343px;width:41px;height:8px;background:#fff;"></div>
<div class="t" style="right:638.1px;text-align:right;top:337.0px;font-size:6.2px;color:#4a4a4a;font-weight:400;font-family:'Liberation Sans',sans-serif;transform:scaleX(0.8600);transform-origin:right center;">1,268</div>
<div class="r" style="left:326px;top:343px;width:41px;height:8px;background:#fff;"></div>
<div class="t" style="right:595.1px;text-align:right;top:337.0px;font-size:6.2px;color:#4a4a4a;font-weight:400;font-family:'Liberation Sans',sans-serif;transform:scaleX(0.8600);transform-origin:right center;">1,268</div>
<div class="r" style="left:369px;top:343px;width:41px;height:8px;background:#fff;"></div>
<div class="t" style="right:552.1px;text-align:right;top:337.0px;font-size:6.2px;color:#4a4a4a;font-weight:400;font-family:'Liberation Sans',sans-serif;transform:scaleX(0.8600);transform-origin:right center;">1,268</div>
<div class="r" style="left:412px;top:343px;width:41px;height:8px;background:#fff;"></div>
<div class="t" style="right:509.1px;text-align:right;top:337.0px;font-size:6.2px;color:#4a4a4a;font-weight:400;font-family:'Liberation Sans',sans-serif;transform:scaleX(0.8600);transform-origin:right center;">1,268</div>
<div class="r" style="left:455px;top:343px;width:41px;height:8px;background:#fff;"></div>
<div class="t" style="right:466.1px;text-align:right;top:337.0px;font-size:6.2px;color:#4a4a4a;font-weight:400;font-family:'Liberation Sans',sans-serif;transform:scaleX(0.8600);transform-origin:right center;">1,268</div>
<div class="r" style="left:498px;top:343px;width:41px;height:8px;background:#fff;"></div>
<div class="t" style="right:423.1px;text-align:right;top:337.0px;font-size:6.2px;color:#4a4a4a;font-weight:400;font-family:'Liberation Sans',sans-serif;transform:scaleX(0.8600);transform-origin:right center;">1,268</div>
<div class="r" style="left:541px;top:343px;width:41px;height:8px;background:#fff;"></div>
<div class="t" style="right:380.1px;text-align:right;top:337.0px;font-size:6.2px;color:#4a4a4a;font-weight:400;font-family:'Liberation Sans',sans-serif;transform:scaleX(0.8600);transform-origin:right center;">1,268</div>
<div class="r" style="left:584px;top:343px;width:41px;height:8px;background:#fff;"></div>
<div class="t" style="right:337.1px;text-align:right;top:337.0px;font-size:6.2px;color:#4a4a4a;font-weight:400;font-family:'Liberation Sans',sans-serif;transform:scaleX(0.8600);transform-origin:right center;">1,268</div>
<div class="r" style="left:627px;top:343px;width:41px;height:8px;background:#fff;"></div>
<div class="t" style="right:294.1px;text-align:right;top:337.0px;font-size:6.2px;color:#4a4a4a;font-weight:400;font-family:'Liberation Sans',sans-serif;transform:scaleX(0.8600);transform-origin:right center;">1,268</div>
<div class="r" style="left:670px;top:343px;width:41px;height:8px;background:#fff;"></div>
<div class="t" style="right:251.10000000000002px;text-align:right;top:337.0px;font-size:6.2px;color:#4a4a4a;font-weight:400;font-family:'Liberation Sans',sans-serif;transform:scaleX(0.8600);transform-origin:right center;">1,268</div>
<div class="r" style="left:713px;top:343px;width:41px;height:8px;background:#d9d9d9;"></div>
<div class="t" style="right:208.60000000000002px;text-align:right;top:337.0px;font-size:6.2px;color:#3e3e3e;font-weight:700;font-family:'Liberation Sans',sans-serif;transform:scaleX(0.8530);transform-origin:right center;">15,216</div>
<svg class="r" style="left:771px;top:343px;" width="1" height="8" viewBox="0 0 1 8"><path d="M0.5 0V8" stroke="#7a7a7a" stroke-width="0.9" stroke-dasharray="1.1 0.9"/></svg>
<div class="t" style="right:172.70000000000005px;text-align:right;top:337.0px;font-size:6.2px;color:#777;font-weight:400;font-family:'Liberation Sans',sans-serif;transform:scaleX(0.8600);transform-origin:right center;">0.0%</div>
<div class="r" style="left:28px;top:351.7px;width:125px;height:1px;background:#fcfcfc;"></div>
<div class="t" style="left:33.8px;top:346.9px;font-size:5.9px;color:#4a4a4a;font-weight:400;font-family:'Liberation Sans',sans-serif;transform:scaleX(0.9849);transform-origin:left center;">[+] Net PP&amp;E</div>
<div class="r" style="left:154px;top:353px;width:41px;height:8px;background:#d9d9d9;"></div>
<div class="t" style="right:767.6px;text-align:right;top:347.0px;font-size:6.2px;color:#3e3e3e;font-weight:700;font-family:'Liberation Sans',sans-serif;transform:scaleX(0.8530);transform-origin:right center;">2,710,699</div>
<div class="r" style="left:197px;top:353px;width:41px;height:8px;background:#fff;"></div>
<div class="t" style="right:724.1px;text-align:right;top:347.0px;font-size:6.2px;color:#4a4a4a;font-weight:400;font-family:'Liberation Sans',sans-serif;transform:scaleX(0.8600);transform-origin:right center;">427,377</div>
<div class="r" style="left:240px;top:353px;width:41px;height:8px;background:#fff;"></div>
<div class="t" style="right:681.1px;text-align:right;top:347.0px;font-size:6.2px;color:#4a4a4a;font-weight:400;font-family:'Liberation Sans',sans-serif;transform:scaleX(0.8600);transform-origin:right center;">873,743</div>
<div class="r" style="left:283px;top:353px;width:41px;height:8px;background:#fff;"></div>
<div class="t" style="right:638.1px;text-align:right;top:347.0px;font-size:6.2px;color:#4a4a4a;font-weight:400;font-family:'Liberation Sans',sans-serif;transform:scaleX(0.8600);transform-origin:right center;">1,062,328</div>
<div class="r" style="left:326px;top:353px;width:41px;height:8px;background:#fff;"></div>
<div class="t" style="right:595.1px;text-align:right;top:347.0px;font-size:6.2px;color:#4a4a4a;font-weight:400;font-family:'Liberation Sans',sans-serif;transform:scaleX(0.8600);transform-origin:right center;">1,297,171</div>
<div class="r" style="left:369px;top:353px;width:41px;height:8px;background:#fff;"></div>
<div class="t" style="right:552.1px;text-align:right;top:347.0px;font-size:6.2px;color:#4a4a4a;font-weight:400;font-family:'Liberation Sans',sans-serif;transform:scaleX(0.8600);transform-origin:right center;">1,481,568</div>
<div class="r" style="left:412px;top:353px;width:41px;height:8px;background:#fff;"></div>
<div class="t" style="right:509.1px;text-align:right;top:347.0px;font-size:6.2px;color:#4a4a4a;font-weight:400;font-family:'Liberation Sans',sans-serif;transform:scaleX(0.8600);transform-origin:right center;">1,949,883</div>
<div class="r" style="left:455px;top:353px;width:41px;height:8px;background:#fff;"></div>
<div class="t" style="right:466.1px;text-align:right;top:347.0px;font-size:6.2px;color:#4a4a4a;font-weight:400;font-family:'Liberation Sans',sans-serif;transform:scaleX(0.8600);transform-origin:right center;">2,070,189</div>
<div class="r" style="left:498px;top:353px;width:41px;height:8px;background:#fff;"></div>
<div class="t" style="right:423.1px;text-align:right;top:347.0px;font-size:6.2px;color:#4a4a4a;font-weight:400;font-family:'Liberation Sans',sans-serif;transform:scaleX(0.8600);transform-origin:right center;">2,170,195</div>
<div class="r" style="left:541px;top:353px;width:41px;height:8px;background:#fff;"></div>
<div class="t" style="right:380.1px;text-align:right;top:347.0px;font-size:6.2px;color:#4a4a4a;font-weight:400;font-family:'Liberation Sans',sans-serif;transform:scaleX(0.8600);transform-origin:right center;">2,555,757</div>
<div class="r" style="left:584px;top:353px;width:41px;height:8px;background:#fff;"></div>
<div class="t" style="right:337.1px;text-align:right;top:347.0px;font-size:6.2px;color:#4a4a4a;font-weight:400;font-family:'Liberation Sans',sans-serif;transform:scaleX(0.8600);transform-origin:right center;">2,683,819</div>
<div class="r" style="left:627px;top:353px;width:41px;height:8px;background:#fff;"></div>
<div class="t" style="right:294.1px;text-align:right;top:347.0px;font-size:6.2px;color:#4a4a4a;font-weight:400;font-family:'Liberation Sans',sans-serif;transform:scaleX(0.8600);transform-origin:right center;">2,811,880</div>
<div class="r" style="left:670px;top:353px;width:41px;height:8px;background:#fff;"></div>
<div class="t" style="right:251.10000000000002px;text-align:right;top:347.0px;font-size:6.2px;color:#4a4a4a;font-weight:400;font-family:'Liberation Sans',sans-serif;transform:scaleX(0.8600);transform-origin:right center;">2,452,442</div>
<div class="r" style="left:713px;top:353px;width:41px;height:8px;background:#d9d9d9;"></div>
<div class="t" style="right:208.60000000000002px;text-align:right;top:347.0px;font-size:6.2px;color:#3e3e3e;font-weight:700;font-family:'Liberation Sans',sans-serif;transform:scaleX(0.8530);transform-origin:right center;">21,836,352</div>
<div class="r" style="left:771.5px;top:353px;width:15.8px;height:8px;background:#dcdcdc;"></div>
<svg class="r" style="left:771px;top:353px;" width="1" height="8" viewBox="0 0 1 8"><path d="M0.5 0V8" stroke="#7a7a7a" stroke-width="0.9" stroke-dasharray="1.1 0.9"/></svg>
<div class="t" style="right:172.70000000000005px;text-align:right;top:347.0px;font-size:6.2px;color:#777;font-weight:400;font-family:'Liberation Sans',sans-serif;transform:scaleX(0.8600);transform-origin:right center;">705.6%</div>
<div class="r" style="left:28px;top:361.7px;width:125px;height:1px;background:#fcfcfc;"></div>
<div class="t" style="left:33.8px;top:356.9px;font-size:5.9px;color:#4a4a4a;font-weight:400;font-family:'Liberation Sans',sans-serif;transform:scaleX(1.0485);transform-origin:left center;">[*] 1800 (Investments)</div>
<div class="r" style="left:154px;top:363px;width:41px;height:8px;background:#d9d9d9;"></div>
<div class="t" style="right:767.6px;text-align:right;top:357.0px;font-size:6.2px;color:#3e3e3e;font-weight:700;font-family:'Liberation Sans',sans-serif;transform:scaleX(0.8530);transform-origin:right center;">24,000</div>
<div class="r" style="left:197px;top:363px;width:41px;height:8px;background:#fff;"></div>
<div class="t" style="right:724.1px;text-align:right;top:357.0px;font-size:6.2px;color:#4a4a4a;font-weight:400;font-family:'Liberation Sans',sans-serif;transform:scaleX(0.8600);transform-origin:right center;">2,000</div>
<div class="r" style="left:240px;top:363px;width:41px;height:8px;background:#fff;"></div>
<div class="t" style="right:681.1px;text-align:right;top:357.0px;font-size:6.2px;color:#4a4a4a;font-weight:400;font-family:'Liberation Sans',sans-serif;transform:scaleX(0.8600);transform-origin:right center;">2,000</div>
<div class="r" style="left:283px;top:363px;width:41px;height:8px;background:#fff;"></div>
<div class="t" style="right:638.1px;text-align:right;top:357.0px;font-size:6.2px;color:#4a4a4a;font-weight:400;font-family:'Liberation Sans',sans-serif;transform:scaleX(0.8600);transform-origin:right center;">2,000</div>
<div class="r" style="left:326px;top:363px;width:41px;height:8px;background:#fff;"></div>
<div class="t" style="right:595.1px;text-align:right;top:357.0px;font-size:6.2px;color:#4a4a4a;font-weight:400;font-family:'Liberation Sans',sans-serif;transform:scaleX(0.8600);transform-origin:right center;">2,000</div>
<div class="r" style="left:369px;top:363px;width:41px;height:8px;background:#fff;"></div>
<div class="t" style="right:552.1px;text-align:right;top:357.0px;font-size:6.2px;color:#4a4a4a;font-weight:400;font-family:'Liberation Sans',sans-serif;transform:scaleX(0.8600);transform-origin:right center;">2,000</div>
<div class="r" style="left:412px;top:363px;width:41px;height:8px;background:#fff;"></div>
<div class="t" style="right:509.1px;text-align:right;top:357.0px;font-size:6.2px;color:#4a4a4a;font-weight:400;font-family:'Liberation Sans',sans-serif;transform:scaleX(0.8600);transform-origin:right center;">2,000</div>
<div class="r" style="left:455px;top:363px;width:41px;height:8px;background:#fff;"></div>
<div class="t" style="right:466.1px;text-align:right;top:357.0px;font-size:6.2px;color:#4a4a4a;font-weight:400;font-family:'Liberation Sans',sans-serif;transform:scaleX(0.8600);transform-origin:right center;">2,000</div>
<div class="r" style="left:498px;top:363px;width:41px;height:8px;background:#fff;"></div>
<div class="t" style="right:423.1px;text-align:right;top:357.0px;font-size:6.2px;color:#4a4a4a;font-weight:400;font-family:'Liberation Sans',sans-serif;transform:scaleX(0.8600);transform-origin:right center;">2,000</div>
<div class="r" style="left:541px;top:363px;width:41px;height:8px;background:#fff;"></div>
<div class="t" style="right:380.1px;text-align:right;top:357.0px;font-size:6.2px;color:#4a4a4a;font-weight:400;font-family:'Liberation Sans',sans-serif;transform:scaleX(0.8600);transform-origin:right center;">2,000</div>
<div class="r" style="left:584px;top:363px;width:41px;height:8px;background:#fff;"></div>
<div class="t" style="right:337.1px;text-align:right;top:357.0px;font-size:6.2px;color:#4a4a4a;font-weight:400;font-family:'Liberation Sans',sans-serif;transform:scaleX(0.8600);transform-origin:right center;">2,000</div>
<div class="r" style="left:627px;top:363px;width:41px;height:8px;background:#fff;"></div>
<div class="t" style="right:294.1px;text-align:right;top:357.0px;font-size:6.2px;color:#4a4a4a;font-weight:400;font-family:'Liberation Sans',sans-serif;transform:scaleX(0.8600);transform-origin:right center;">2,000</div>
<div class="r" style="left:670px;top:363px;width:41px;height:8px;background:#fff;"></div>
<div class="t" style="right:251.10000000000002px;text-align:right;top:357.0px;font-size:6.2px;color:#4a4a4a;font-weight:400;font-family:'Liberation Sans',sans-serif;transform:scaleX(0.8600);transform-origin:right center;">2,000</div>
<div class="r" style="left:713px;top:363px;width:41px;height:8px;background:#d9d9d9;"></div>
<div class="t" style="right:208.60000000000002px;text-align:right;top:357.0px;font-size:6.2px;color:#3e3e3e;font-weight:700;font-family:'Liberation Sans',sans-serif;transform:scaleX(0.8530);transform-origin:right center;">24,000</div>
<svg class="r" style="left:771px;top:363px;" width="1" height="8" viewBox="0 0 1 8"><path d="M0.5 0V8" stroke="#7a7a7a" stroke-width="0.9" stroke-dasharray="1.1 0.9"/></svg>
<div class="t" style="right:172.70000000000005px;text-align:right;top:357.0px;font-size:6.2px;color:#777;font-weight:400;font-family:'Liberation Sans',sans-serif;transform:scaleX(0.8600);transform-origin:right center;">0.0%</div>
<div class="r" style="left:28px;top:371.7px;width:125px;height:1px;background:#fcfcfc;"></div>
<div class="t" style="left:33.8px;top:366.9px;font-size:5.9px;color:#4a4a4a;font-weight:400;font-family:'Liberation Sans',sans-serif;transform:scaleX(1.0336);transform-origin:left center;">[*] 1900 (Intantible Assets)</div>
<div class="r" style="left:154px;top:373px;width:41px;height:8px;background:#d9d9d9;"></div>
<div class="t" style="right:767.6px;text-align:right;top:367.0px;font-size:6.2px;color:#3e3e3e;font-weight:700;font-family:'Liberation Sans',sans-serif;transform:scaleX(0.8530);transform-origin:right center;">48,000</div>
<div class="r" style="left:197px;top:373px;width:41px;height:8px;background:#fff;"></div>
<div class="t" style="right:724.1px;text-align:right;top:367.0px;font-size:6.2px;color:#4a4a4a;font-weight:400;font-family:'Liberation Sans',sans-serif;transform:scaleX(0.8600);transform-origin:right center;">4,000</div>
<div class="r" style="left:240px;top:373px;width:41px;height:8px;background:#fff;"></div>
<div class="t" style="right:681.1px;text-align:right;top:367.0px;font-size:6.2px;color:#4a4a4a;font-weight:400;font-family:'Liberation Sans',sans-serif;transform:scaleX(0.8600);transform-origin:right center;">4,000</div>
<div class="r" style="left:283px;top:373px;width:41px;height:8px;background:#fff;"></div>
<div class="t" style="right:638.1px;text-align:right;top:367.0px;font-size:6.2px;color:#4a4a4a;font-weight:400;font-family:'Liberation Sans',sans-serif;transform:scaleX(0.8600);transform-origin:right center;">4,000</div>
<div class="r" style="left:326px;top:373px;width:41px;height:8px;background:#fff;"></div>
<div class="t" style="right:595.1px;text-align:right;top:367.0px;font-size:6.2px;color:#4a4a4a;font-weight:400;font-family:'Liberation Sans',sans-serif;transform:scaleX(0.8600);transform-origin:right center;">4,000</div>
<div class="r" style="left:369px;top:373px;width:41px;height:8px;background:#fff;"></div>
<div class="t" style="right:552.1px;text-align:right;top:367.0px;font-size:6.2px;color:#4a4a4a;font-weight:400;font-family:'Liberation Sans',sans-serif;transform:scaleX(0.8600);transform-origin:right center;">4,000</div>
<div class="r" style="left:412px;top:373px;width:41px;height:8px;background:#fff;"></div>
<div class="t" style="right:509.1px;text-align:right;top:367.0px;font-size:6.2px;color:#4a4a4a;font-weight:400;font-family:'Liberation Sans',sans-serif;transform:scaleX(0.8600);transform-origin:right center;">4,000</div>
<div class="r" style="left:455px;top:373px;width:41px;height:8px;background:#fff;"></div>
<div class="t" style="right:466.1px;text-align:right;top:367.0px;font-size:6.2px;color:#4a4a4a;font-weight:400;font-family:'Liberation Sans',sans-serif;transform:scaleX(0.8600);transform-origin:right center;">4,000</div>
<div class="r" style="left:498px;top:373px;width:41px;height:8px;background:#fff;"></div>
<div class="t" style="right:423.1px;text-align:right;top:367.0px;font-size:6.2px;color:#4a4a4a;font-weight:400;font-family:'Liberation Sans',sans-serif;transform:scaleX(0.8600);transform-origin:right center;">4,000</div>
<div class="r" style="left:541px;top:373px;width:41px;height:8px;background:#fff;"></div>
<div class="t" style="right:380.1px;text-align:right;top:367.0px;font-size:6.2px;color:#4a4a4a;font-weight:400;font-family:'Liberation Sans',sans-serif;transform:scaleX(0.8600);transform-origin:right center;">4,000</div>
<div class="r" style="left:584px;top:373px;width:41px;height:8px;background:#fff;"></div>
<div class="t" style="right:337.1px;text-align:right;top:367.0px;font-size:6.2px;color:#4a4a4a;font-weight:400;font-family:'Liberation Sans',sans-serif;transform:scaleX(0.8600);transform-origin:right center;">4,000</div>
<div class="r" style="left:627px;top:373px;width:41px;height:8px;background:#fff;"></div>
<div class="t" style="right:294.1px;text-align:right;top:367.0px;font-size:6.2px;color:#4a4a4a;font-weight:400;font-family:'Liberation Sans',sans-serif;transform:scaleX(0.8600);transform-origin:right center;">4,000</div>
<div class="r" style="left:670px;top:373px;width:41px;height:8px;background:#fff;"></div>
<div class="t" style="right:251.10000000000002px;text-align:right;top:367.0px;font-size:6.2px;color:#4a4a4a;font-weight:400;font-family:'Liberation Sans',sans-serif;transform:scaleX(0.8600);transform-origin:right center;">4,000</div>
<div class="r" style="left:713px;top:373px;width:41px;height:8px;background:#d9d9d9;"></div>
<div class="t" style="right:208.60000000000002px;text-align:right;top:367.0px;font-size:6.2px;color:#3e3e3e;font-weight:700;font-family:'Liberation Sans',sans-serif;transform:scaleX(0.8530);transform-origin:right center;">48,000</div>
<svg class="r" style="left:771px;top:373px;" width="1" height="8" viewBox="0 0 1 8"><path d="M0.5 0V8" stroke="#7a7a7a" stroke-width="0.9" stroke-dasharray="1.1 0.9"/></svg>
<div class="t" style="right:172.70000000000005px;text-align:right;top:367.0px;font-size:6.2px;color:#777;font-weight:400;font-family:'Liberation Sans',sans-serif;transform:scaleX(0.8600);transform-origin:right center;">0.0%</div>
<div class="r" style="left:28px;top:381.3px;width:760.5px;height:1.5px;background:#c4c4c4;"></div>
<div class="t" style="left:36.3px;top:376.9px;font-size:6.0px;color:#444;font-weight:700;font-family:'Liberation Sans',sans-serif;transform:scaleX(0.9807);transform-origin:left center;">Assets</div>
<div class="t" style="right:724.1px;text-align:right;top:376.9px;font-size:6.2px;color:#3e3e3e;font-weight:700;font-family:'Liberation Sans',sans-serif;transform:scaleX(0.8530);transform-origin:right center;">17,793,702</div>
<div class="t" style="right:681.1px;text-align:right;top:376.9px;font-size:6.2px;color:#3e3e3e;font-weight:700;font-family:'Liberation Sans',sans-serif;transform:scaleX(0.8530);transform-origin:right center;">19,299,512</div>
<div class="t" style="right:638.1px;text-align:right;top:376.9px;font-size:6.2px;color:#3e3e3e;font-weight:700;font-family:'Liberation Sans',sans-serif;transform:scaleX(0.8530);transform-origin:right center;">18,310,371</div>
<div class="t" style="right:595.1px;text-align:right;top:376.9px;font-size:6.2px;color:#3e3e3e;font-weight:700;font-family:'Liberation Sans',sans-serif;transform:scaleX(0.8530);transform-origin:right center;">19,047,828</div>
<div class="t" style="right:552.1px;text-align:right;top:376.9px;font-size:6.2px;color:#3e3e3e;font-weight:700;font-family:'Liberation Sans',sans-serif;transform:scaleX(0.8530);transform-origin:right center;">19,784,453</div>
<div class="t" style="right:509.1px;text-align:right;top:376.9px;font-size:6.2px;color:#3e3e3e;font-weight:700;font-family:'Liberation Sans',sans-serif;transform:scaleX(0.8530);transform-origin:right center;">18,530,794</div>
<div class="t" style="right:466.1px;text-align:right;top:376.9px;font-size:6.2px;color:#3e3e3e;font-weight:700;font-family:'Liberation Sans',sans-serif;transform:scaleX(0.8530);transform-origin:right center;">18,931,921</div>
<div class="t" style="right:423.1px;text-align:right;top:376.9px;font-size:6.2px;color:#3e3e3e;font-weight:700;font-family:'Liberation Sans',sans-serif;transform:scaleX(0.8530);transform-origin:right center;">18,689,313</div>
<div class="t" style="right:380.1px;text-align:right;top:376.9px;font-size:6.2px;color:#3e3e3e;font-weight:700;font-family:'Liberation Sans',sans-serif;transform:scaleX(0.8530);transform-origin:right center;">18,485,051</div>
<div class="t" style="right:337.1px;text-align:right;top:376.9px;font-size:6.2px;color:#3e3e3e;font-weight:700;font-family:'Liberation Sans',sans-serif;transform:scaleX(0.8530);transform-origin:right center;">18,275,804</div>
<div class="t" style="right:294.1px;text-align:right;top:376.9px;font-size:6.2px;color:#3e3e3e;font-weight:700;font-family:'Liberation Sans',sans-serif;transform:scaleX(0.8530);transform-origin:right center;">17,939,681</div>
<div class="t" style="right:251.10000000000002px;text-align:right;top:376.9px;font-size:6.2px;color:#3e3e3e;font-weight:700;font-family:'Liberation Sans',sans-serif;transform:scaleX(0.8530);transform-origin:right center;">18,645,797</div>
<div class="r" style="left:28px;top:402px;width:759.8px;height:12px;background:#d9d9d9;"></div>
<div class="t" style="left:30.7px;top:398.4px;font-size:6.8px;color:#444;font-weight:400;font-family:'Liberation Sans',sans-serif;transform:scaleX(0.8200);transform-origin:left center;">Liabilities</div>
<div class="t" style="left:33.8px;top:409.9px;font-size:5.9px;color:#4a4a4a;font-weight:400;font-family:'Liberation Sans',sans-serif;transform:scaleX(0.9971);transform-origin:left center;">[-] Current Liabilities</div>
<div class="r" style="left:154px;top:416px;width:41px;height:8px;background:#d9d9d9;"></div>
<div class="t" style="right:767.6px;text-align:right;top:410.0px;font-size:6.2px;color:#3e3e3e;font-weight:700;font-family:'Liberation Sans',sans-serif;transform:scaleX(0.8530);transform-origin:right center;">7,368,526</div>
<div class="r" style="left:197px;top:416px;width:41px;height:8px;background:#fff;"></div>
<div class="t" style="right:724.1px;text-align:right;top:410.0px;font-size:6.2px;color:#4a4a4a;font-weight:400;font-family:'Liberation Sans',sans-serif;transform:scaleX(0.8600);transform-origin:right center;">503,175</div>
<div class="r" style="left:240px;top:416px;width:41px;height:8px;background:#fff;"></div>
<div class="t" style="right:681.1px;text-align:right;top:410.0px;font-size:6.2px;color:#4a4a4a;font-weight:400;font-family:'Liberation Sans',sans-serif;transform:scaleX(0.8600);transform-origin:right center;">532,531</div>
<div class="r" style="left:283px;top:416px;width:41px;height:8px;background:#fff;"></div>
<div class="t" style="right:638.1px;text-align:right;top:410.0px;font-size:6.2px;color:#4a4a4a;font-weight:400;font-family:'Liberation Sans',sans-serif;transform:scaleX(0.8600);transform-origin:right center;">487,177</div>
<div class="r" style="left:326px;top:416px;width:41px;height:8px;background:#fff;"></div>
<div class="t" style="right:595.1px;text-align:right;top:410.0px;font-size:6.2px;color:#4a4a4a;font-weight:400;font-family:'Liberation Sans',sans-serif;transform:scaleX(0.8600);transform-origin:right center;">484,975</div>
<div class="r" style="left:369px;top:416px;width:41px;height:8px;background:#fff;"></div>
<div class="t" style="right:552.1px;text-align:right;top:410.0px;font-size:6.2px;color:#4a4a4a;font-weight:400;font-family:'Liberation Sans',sans-serif;transform:scaleX(0.8600);transform-origin:right center;">473,946</div>
<div class="r" style="left:412px;top:416px;width:41px;height:8px;background:#fff;"></div>
<div class="t" style="right:509.1px;text-align:right;top:410.0px;font-size:6.2px;color:#4a4a4a;font-weight:400;font-family:'Liberation Sans',sans-serif;transform:scaleX(0.8600);transform-origin:right center;">541,774</div>
<div class="r" style="left:455px;top:416px;width:41px;height:8px;background:#fff;"></div>
<div class="t" style="right:466.1px;text-align:right;top:410.0px;font-size:6.2px;color:#4a4a4a;font-weight:400;font-family:'Liberation Sans',sans-serif;transform:scaleX(0.8600);transform-origin:right center;">517,645</div>
<div class="r" style="left:498px;top:416px;width:41px;height:8px;background:#fff;"></div>
<div class="t" style="right:423.1px;text-align:right;top:410.0px;font-size:6.2px;color:#4a4a4a;font-weight:400;font-family:'Liberation Sans',sans-serif;transform:scaleX(0.8600);transform-origin:right center;">520,931</div>
<div class="r" style="left:541px;top:416px;width:41px;height:8px;background:#fff;"></div>
<div class="t" style="right:380.1px;text-align:right;top:410.0px;font-size:6.2px;color:#4a4a4a;font-weight:400;font-family:'Liberation Sans',sans-serif;transform:scaleX(0.8600);transform-origin:right center;">564,895</div>
<div class="r" style="left:584px;top:416px;width:41px;height:8px;background:#fff;"></div>
<div class="t" style="right:337.1px;text-align:right;top:410.0px;font-size:6.2px;color:#4a4a4a;font-weight:400;font-family:'Liberation Sans',sans-serif;transform:scaleX(0.8600);transform-origin:right center;">516,431</div>
<div class="r" style="left:627px;top:416px;width:41px;height:8px;background:#fff;"></div>
<div class="t" style="right:294.1px;text-align:right;top:410.0px;font-size:6.2px;color:#4a4a4a;font-weight:400;font-family:'Liberation Sans',sans-serif;transform:scaleX(0.8600);transform-origin:right center;">600,372</div>
<div class="r" style="left:670px;top:416px;width:41px;height:8px;background:#fff;"></div>
<div class="t" style="right:251.10000000000002px;text-align:right;top:410.0px;font-size:6.2px;color:#4a4a4a;font-weight:400;font-family:'Liberation Sans',sans-serif;transform:scaleX(0.8600);transform-origin:right center;">544,270</div>
<div class="r" style="left:713px;top:416px;width:41px;height:8px;background:#d9d9d9;"></div>
<div class="t" style="right:208.60000000000002px;text-align:right;top:410.0px;font-size:6.2px;color:#3e3e3e;font-weight:700;font-family:'Liberation Sans',sans-serif;transform:scaleX(0.8530);transform-origin:right center;">6,288,121</div>
<div class="r" style="left:769.248px;top:416px;width:2.352px;height:8px;background:#e0868f;"></div>
<svg class="r" style="left:771px;top:416px;" width="1" height="8" viewBox="0 0 1 8"><path d="M0.5 0V8" stroke="#7a7a7a" stroke-width="0.9" stroke-dasharray="1.1 0.9"/></svg>
<div class="t" style="right:172.70000000000005px;text-align:right;top:410.0px;font-size:6.2px;color:#777;font-weight:400;font-family:'Liberation Sans',sans-serif;transform:scaleX(0.8600);transform-origin:right center;">-14.7%</div>
<div class="r" style="left:28px;top:424.7px;width:125px;height:1px;background:#fcfcfc;"></div>
<div class="t" style="left:41.9px;top:419.9px;font-size:5.9px;color:#4a4a4a;font-weight:400;font-family:'Liberation Sans',sans-serif;transform:scaleX(1.0037);transform-origin:left center;">[*] 2000 (Accounts Payable)</div>
<div class="r" style="left:154px;top:426px;width:41px;height:8px;background:#d9d9d9;"></div>
<div class="t" style="right:767.6px;text-align:right;top:420.0px;font-size:6.2px;color:#3e3e3e;font-weight:700;font-family:'Liberation Sans',sans-serif;transform:scaleX(0.8530);transform-origin:right center;">5,297,197</div>
<div class="r" style="left:197px;top:426px;width:41px;height:8px;background:#fff;"></div>
<div class="t" style="right:724.1px;text-align:right;top:420.0px;font-size:6.2px;color:#4a4a4a;font-weight:400;font-family:'Liberation Sans',sans-serif;transform:scaleX(0.8600);transform-origin:right center;">322,857</div>
<div class="r" style="left:240px;top:426px;width:41px;height:8px;background:#fff;"></div>
<div class="t" style="right:681.1px;text-align:right;top:420.0px;font-size:6.2px;color:#4a4a4a;font-weight:400;font-family:'Liberation Sans',sans-serif;transform:scaleX(0.8600);transform-origin:right center;">349,661</div>
<div class="r" style="left:283px;top:426px;width:41px;height:8px;background:#fff;"></div>
<div class="t" style="right:638.1px;text-align:right;top:420.0px;font-size:6.2px;color:#4a4a4a;font-weight:400;font-family:'Liberation Sans',sans-serif;transform:scaleX(0.8600);transform-origin:right center;">308,242</div>
<div class="r" style="left:326px;top:426px;width:41px;height:8px;background:#fff;"></div>
<div class="t" style="right:595.1px;text-align:right;top:420.0px;font-size:6.2px;color:#4a4a4a;font-weight:400;font-family:'Liberation Sans',sans-serif;transform:scaleX(0.8600);transform-origin:right center;">304,587</div>
<div class="r" style="left:369px;top:426px;width:41px;height:8px;background:#fff;"></div>
<div class="t" style="right:552.1px;text-align:right;top:420.0px;font-size:6.2px;color:#4a4a4a;font-weight:400;font-family:'Liberation Sans',sans-serif;transform:scaleX(0.8600);transform-origin:right center;">300,523</div>
<div class="r" style="left:412px;top:426px;width:41px;height:8px;background:#fff;"></div>
<div class="t" style="right:509.1px;text-align:right;top:420.0px;font-size:6.2px;color:#4a4a4a;font-weight:400;font-family:'Liberation Sans',sans-serif;transform:scaleX(0.8600);transform-origin:right center;">370,777</div>
<div class="r" style="left:455px;top:426px;width:41px;height:8px;background:#fff;"></div>
<div class="t" style="right:466.1px;text-align:right;top:420.0px;font-size:6.2px;color:#4a4a4a;font-weight:400;font-family:'Liberation Sans',sans-serif;transform:scaleX(0.8600);transform-origin:right center;">337,795</div>
<div class="r" style="left:498px;top:426px;width:41px;height:8px;background:#fff;"></div>
<div class="t" style="right:423.1px;text-align:right;top:420.0px;font-size:6.2px;color:#4a4a4a;font-weight:400;font-family:'Liberation Sans',sans-serif;transform:scaleX(0.8600);transform-origin:right center;">343,614</div>
<div class="r" style="left:541px;top:426px;width:41px;height:8px;background:#fff;"></div>
<div class="t" style="right:380.1px;text-align:right;top:420.0px;font-size:6.2px;color:#4a4a4a;font-weight:400;font-family:'Liberation Sans',sans-serif;transform:scaleX(0.8600);transform-origin:right center;">375,556</div>
<div class="r" style="left:584px;top:426px;width:41px;height:8px;background:#fff;"></div>
<div class="t" style="right:337.1px;text-align:right;top:420.0px;font-size:6.2px;color:#4a4a4a;font-weight:400;font-family:'Liberation Sans',sans-serif;transform:scaleX(0.8600);transform-origin:right center;">334,288</div>
<div class="r" style="left:627px;top:426px;width:41px;height:8px;background:#fff;"></div>
<div class="t" style="right:294.1px;text-align:right;top:420.0px;font-size:6.2px;color:#4a4a4a;font-weight:400;font-family:'Liberation Sans',sans-serif;transform:scaleX(0.8600);transform-origin:right center;">421,732</div>
<div class="r" style="left:670px;top:426px;width:41px;height:8px;background:#fff;"></div>
<div class="t" style="right:251.10000000000002px;text-align:right;top:420.0px;font-size:6.2px;color:#4a4a4a;font-weight:400;font-family:'Liberation Sans',sans-serif;transform:scaleX(0.8600);transform-origin:right center;">358,265</div>
<div class="r" style="left:713px;top:426px;width:41px;height:8px;background:#d9d9d9;"></div>
<div class="t" style="right:208.60000000000002px;text-align:right;top:420.0px;font-size:6.2px;color:#3e3e3e;font-weight:700;font-family:'Liberation Sans',sans-serif;transform:scaleX(0.8530);transform-origin:right center;">4,127,895</div>
<div class="r" style="left:768.0640000000001px;top:426px;width:3.5360000000000005px;height:8px;background:#e0868f;"></div>
<svg class="r" style="left:771px;top:426px;" width="1" height="8" viewBox="0 0 1 8"><path d="M0.5 0V8" stroke="#7a7a7a" stroke-width="0.9" stroke-dasharray="1.1 0.9"/></svg>
<div class="t" style="right:172.70000000000005px;text-align:right;top:420.0px;font-size:6.2px;color:#777;font-weight:400;font-family:'Liberation Sans',sans-serif;transform:scaleX(0.8600);transform-origin:right center;">-22.1%</div>
<div class="r" style="left:28px;top:434.7px;width:125px;height:1px;background:#fcfcfc;"></div>
<div class="t" style="left:41.9px;top:429.9px;font-size:5.9px;color:#4a4a4a;font-weight:400;font-family:'Liberation Sans',sans-serif;transform:scaleX(0.9919);transform-origin:left center;">[*] 2010 (Short term Notes Payable)</div>
<div class="r" style="left:154px;top:436px;width:41px;height:8px;background:#d9d9d9;"></div>
<div class="t" style="right:767.6px;text-align:right;top:430.0px;font-size:6.2px;color:#3e3e3e;font-weight:700;font-family:'Liberation Sans',sans-serif;transform:scaleX(0.8530);transform-origin:right center;">342,000</div>
<div class="r" style="left:197px;top:436px;width:41px;height:8px;background:#fff;"></div>
<div class="t" style="right:724.1px;text-align:right;top:430.0px;font-size:6.2px;color:#4a4a4a;font-weight:400;font-family:'Liberation Sans',sans-serif;transform:scaleX(0.8600);transform-origin:right center;">28,500</div>
<div class="r" style="left:240px;top:436px;width:41px;height:8px;background:#fff;"></div>
<div class="t" style="right:681.1px;text-align:right;top:430.0px;font-size:6.2px;color:#4a4a4a;font-weight:400;font-family:'Liberation Sans',sans-serif;transform:scaleX(0.8600);transform-origin:right center;">28,500</div>
<div class="r" style="left:283px;top:436px;width:41px;height:8px;background:#fff;"></div>
<div class="t" style="right:638.1px;text-align:right;top:430.0px;font-size:6.2px;color:#4a4a4a;font-weight:400;font-family:'Liberation Sans',sans-serif;transform:scaleX(0.8600);transform-origin:right center;">28,500</div>
<div class="r" style="left:326px;top:436px;width:41px;height:8px;background:#fff;"></div>
<div class="t" style="right:595.1px;text-align:right;top:430.0px;font-size:6.2px;color:#4a4a4a;font-weight:400;font-family:'Liberation Sans',sans-serif;transform:scaleX(0.8600);transform-origin:right center;">28,500</div>
<div class="r" style="left:369px;top:436px;width:41px;height:8px;background:#fff;"></div>
<div class="t" style="right:552.1px;text-align:right;top:430.0px;font-size:6.2px;color:#4a4a4a;font-weight:400;font-family:'Liberation Sans',sans-serif;transform:scaleX(0.8600);transform-origin:right center;">28,500</div>
<div class="r" style="left:412px;top:436px;width:41px;height:8px;background:#fff;"></div>
<div class="t" style="right:509.1px;text-align:right;top:430.0px;font-size:6.2px;color:#4a4a4a;font-weight:400;font-family:'Liberation Sans',sans-serif;transform:scaleX(0.8600);transform-origin:right center;">28,500</div>
<div class="r" style="left:455px;top:436px;width:41px;height:8px;background:#fff;"></div>
<div class="t" style="right:466.1px;text-align:right;top:430.0px;font-size:6.2px;color:#4a4a4a;font-weight:400;font-family:'Liberation Sans',sans-serif;transform:scaleX(0.8600);transform-origin:right center;">28,500</div>
<div class="r" style="left:498px;top:436px;width:41px;height:8px;background:#fff;"></div>
<div class="t" style="right:423.1px;text-align:right;top:430.0px;font-size:6.2px;color:#4a4a4a;font-weight:400;font-family:'Liberation Sans',sans-serif;transform:scaleX(0.8600);transform-origin:right center;">28,500</div>
<div class="r" style="left:541px;top:436px;width:41px;height:8px;background:#fff;"></div>
<div class="t" style="right:380.1px;text-align:right;top:430.0px;font-size:6.2px;color:#4a4a4a;font-weight:400;font-family:'Liberation Sans',sans-serif;transform:scaleX(0.8600);transform-origin:right center;">28,500</div>
<div class="r" style="left:584px;top:436px;width:41px;height:8px;background:#fff;"></div>
<div class="t" style="right:337.1px;text-align:right;top:430.0px;font-size:6.2px;color:#4a4a4a;font-weight:400;font-family:'Liberation Sans',sans-serif;transform:scaleX(0.8600);transform-origin:right center;">28,500</div>
<div class="r" style="left:627px;top:436px;width:41px;height:8px;background:#fff;"></div>
<div class="t" style="right:294.1px;text-align:right;top:430.0px;font-size:6.2px;color:#4a4a4a;font-weight:400;font-family:'Liberation Sans',sans-serif;transform:scaleX(0.8600);transform-origin:right center;">28,500</div>
<div class="r" style="left:670px;top:436px;width:41px;height:8px;background:#fff;"></div>
<div class="t" style="right:251.10000000000002px;text-align:right;top:430.0px;font-size:6.2px;color:#4a4a4a;font-weight:400;font-family:'Liberation Sans',sans-serif;transform:scaleX(0.8600);transform-origin:right center;">28,500</div>
<div class="r" style="left:713px;top:436px;width:41px;height:8px;background:#d9d9d9;"></div>
<div class="t" style="right:208.60000000000002px;text-align:right;top:430.0px;font-size:6.2px;color:#3e3e3e;font-weight:700;font-family:'Liberation Sans',sans-serif;transform:scaleX(0.8530);transform-origin:right center;">342,000</div>
<svg class="r" style="left:771px;top:436px;" width="1" height="8" viewBox="0 0 1 8"><path d="M0.5 0V8" stroke="#7a7a7a" stroke-width="0.9" stroke-dasharray="1.1 0.9"/></svg>
<div class="t" style="right:172.70000000000005px;text-align:right;top:430.0px;font-size:6.2px;color:#777;font-weight:400;font-family:'Liberation Sans',sans-serif;transform:scaleX(0.8600);transform-origin:right center;">0.0%</div>
<div class="r" style="left:28px;top:444.7px;width:125px;height:1px;background:#fcfcfc;"></div>
<div class="t" style="left:41.9px;top:439.9px;font-size:5.9px;color:#4a4a4a;font-weight:400;font-family:'Liberation Sans',sans-serif;transform:scaleX(0.9937);transform-origin:left center;">[*] 2011 (Salaries Payable)</div>
<div class="r" style="left:154px;top:446px;width:41px;height:8px;background:#d9d9d9;"></div>
<div class="t" style="right:767.6px;text-align:right;top:440.0px;font-size:6.2px;color:#3e3e3e;font-weight:700;font-family:'Liberation Sans',sans-serif;transform:scaleX(0.8530);transform-origin:right center;">25,440</div>
<div class="r" style="left:197px;top:446px;width:41px;height:8px;background:#fff;"></div>
<div class="t" style="right:724.1px;text-align:right;top:440.0px;font-size:6.2px;color:#4a4a4a;font-weight:400;font-family:'Liberation Sans',sans-serif;transform:scaleX(0.8600);transform-origin:right center;">2,120</div>
<div class="r" style="left:240px;top:446px;width:41px;height:8px;background:#fff;"></div>
<div class="t" style="right:681.1px;text-align:right;top:440.0px;font-size:6.2px;color:#4a4a4a;font-weight:400;font-family:'Liberation Sans',sans-serif;transform:scaleX(0.8600);transform-origin:right center;">2,120</div>
<div class="r" style="left:283px;top:446px;width:41px;height:8px;background:#fff;"></div>
<div class="t" style="right:638.1px;text-align:right;top:440.0px;font-size:6.2px;color:#4a4a4a;font-weight:400;font-family:'Liberation Sans',sans-serif;transform:scaleX(0.8600);transform-origin:right center;">2,120</div>
<div class="r" style="left:326px;top:446px;width:41px;height:8px;background:#fff;"></div>
<div class="t" style="right:595.1px;text-align:right;top:440.0px;font-size:6.2px;color:#4a4a4a;font-weight:400;font-family:'Liberation Sans',sans-serif;transform:scaleX(0.8600);transform-origin:right center;">2,120</div>
<div class="r" style="left:369px;top:446px;width:41px;height:8px;background:#fff;"></div>
<div class="t" style="right:552.1px;text-align:right;top:440.0px;font-size:6.2px;color:#4a4a4a;font-weight:400;font-family:'Liberation Sans',sans-serif;transform:scaleX(0.8600);transform-origin:right center;">2,120</div>
<div class="r" style="left:412px;top:446px;width:41px;height:8px;background:#fff;"></div>
<div class="t" style="right:509.1px;text-align:right;top:440.0px;font-size:6.2px;color:#4a4a4a;font-weight:400;font-family:'Liberation Sans',sans-serif;transform:scaleX(0.8600);transform-origin:right center;">2,120</div>
<div class="r" style="left:455px;top:446px;width:41px;height:8px;background:#fff;"></div>
<div class="t" style="right:466.1px;text-align:right;top:440.0px;font-size:6.2px;color:#4a4a4a;font-weight:400;font-family:'Liberation Sans',sans-serif;transform:scaleX(0.8600);transform-origin:right center;">2,120</div>
<div class="r" style="left:498px;top:446px;width:41px;height:8px;background:#fff;"></div>
<div class="t" style="right:423.1px;text-align:right;top:440.0px;font-size:6.2px;color:#4a4a4a;font-weight:400;font-family:'Liberation Sans',sans-serif;transform:scaleX(0.8600);transform-origin:right center;">2,120</div>
<div class="r" style="left:541px;top:446px;width:41px;height:8px;background:#fff;"></div>
<div class="t" style="right:380.1px;text-align:right;top:440.0px;font-size:6.2px;color:#4a4a4a;font-weight:400;font-family:'Liberation Sans',sans-serif;transform:scaleX(0.8600);transform-origin:right center;">2,120</div>
<div class="r" style="left:584px;top:446px;width:41px;height:8px;background:#fff;"></div>
<div class="t" style="right:337.1px;text-align:right;top:440.0px;font-size:6.2px;color:#4a4a4a;font-weight:400;font-family:'Liberation Sans',sans-serif;transform:scaleX(0.8600);transform-origin:right center;">2,120</div>
<div class="r" style="left:627px;top:446px;width:41px;height:8px;background:#fff;"></div>
<div class="t" style="right:294.1px;text-align:right;top:440.0px;font-size:6.2px;color:#4a4a4a;font-weight:400;font-family:'Liberation Sans',sans-serif;transform:scaleX(0.8600);transform-origin:right center;">1,950</div>
<div class="r" style="left:670px;top:446px;width:41px;height:8px;background:#fff;"></div>
<div class="t" style="right:251.10000000000002px;text-align:right;top:440.0px;font-size:6.2px;color:#4a4a4a;font-weight:400;font-family:'Liberation Sans',sans-serif;transform:scaleX(0.8600);transform-origin:right center;">1,950</div>
<div class="r" style="left:713px;top:446px;width:41px;height:8px;background:#d9d9d9;"></div>
<div class="t" style="right:208.60000000000002px;text-align:right;top:440.0px;font-size:6.2px;color:#3e3e3e;font-weight:700;font-family:'Liberation Sans',sans-serif;transform:scaleX(0.8530);transform-origin:right center;">25,100</div>
<div class="r" style="left:771.3000000000001px;top:446px;width:0.3px;height:8px;background:#e0868f;"></div>
<svg class="r" style="left:771px;top:446px;" width="1" height="8" viewBox="0 0 1 8"><path d="M0.5 0V8" stroke="#7a7a7a" stroke-width="0.9" stroke-dasharray="1.1 0.9"/></svg>
<div class="t" style="right:172.70000000000005px;text-align:right;top:440.0px;font-size:6.2px;color:#777;font-weight:400;font-family:'Liberation Sans',sans-serif;transform:scaleX(0.8600);transform-origin:right center;">-1.3%</div>
<div class="r" style="left:28px;top:454.7px;width:125px;height:1px;background:#fcfcfc;"></div>
<div class="t" style="left:41.9px;top:449.9px;font-size:5.9px;color:#4a4a4a;font-weight:400;font-family:'Liberation Sans',sans-serif;transform:scaleX(0.9889);transform-origin:left center;">[*] 2012 (Short Term Debt Payable)</div>
<div class="r" style="left:154px;top:456px;width:41px;height:8px;background:#d9d9d9;"></div>
<div class="t" style="right:767.6px;text-align:right;top:450.0px;font-size:6.2px;color:#3e3e3e;font-weight:700;font-family:'Liberation Sans',sans-serif;transform:scaleX(0.8530);transform-origin:right center;">15,216</div>
<div class="r" style="left:197px;top:456px;width:41px;height:8px;background:#fff;"></div>
<div class="t" style="right:724.1px;text-align:right;top:450.0px;font-size:6.2px;color:#4a4a4a;font-weight:400;font-family:'Liberation Sans',sans-serif;transform:scaleX(0.8600);transform-origin:right center;">1,268</div>
<div class="r" style="left:240px;top:456px;width:41px;height:8px;background:#fff;"></div>
<div class="t" style="right:681.1px;text-align:right;top:450.0px;font-size:6.2px;color:#4a4a4a;font-weight:400;font-family:'Liberation Sans',sans-serif;transform:scaleX(0.8600);transform-origin:right center;">1,268</div>
<div class="r" style="left:283px;top:456px;width:41px;height:8px;background:#fff;"></div>
<div class="t" style="right:638.1px;text-align:right;top:450.0px;font-size:6.2px;color:#4a4a4a;font-weight:400;font-family:'Liberation Sans',sans-serif;transform:scaleX(0.8600);transform-origin:right center;">1,268</div>
<div class="r" style="left:326px;top:456px;width:41px;height:8px;background:#fff;"></div>
<div class="t" style="right:595.1px;text-align:right;top:450.0px;font-size:6.2px;color:#4a4a4a;font-weight:400;font-family:'Liberation Sans',sans-serif;transform:scaleX(0.8600);transform-origin:right center;">1,268</div>
<div class="r" style="left:369px;top:456px;width:41px;height:8px;background:#fff;"></div>
<div class="t" style="right:552.1px;text-align:right;top:450.0px;font-size:6.2px;color:#4a4a4a;font-weight:400;font-family:'Liberation Sans',sans-serif;transform:scaleX(0.8600);transform-origin:right center;">1,268</div>
<div class="r" style="left:412px;top:456px;width:41px;height:8px;background:#fff;"></div>
<div class="t" style="right:509.1px;text-align:right;top:450.0px;font-size:6.2px;color:#4a4a4a;font-weight:400;font-family:'Liberation Sans',sans-serif;transform:scaleX(0.8600);transform-origin:right center;">1,268</div>
<div class="r" style="left:455px;top:456px;width:41px;height:8px;background:#fff;"></div>
<div class="t" style="right:466.1px;text-align:right;top:450.0px;font-size:6.2px;color:#4a4a4a;font-weight:400;font-family:'Liberation Sans',sans-serif;transform:scaleX(0.8600);transform-origin:right center;">1,268</div>
<div class="r" style="left:498px;top:456px;width:41px;height:8px;background:#fff;"></div>
<div class="t" style="right:423.1px;text-align:right;top:450.0px;font-size:6.2px;color:#4a4a4a;font-weight:400;font-family:'Liberation Sans',sans-serif;transform:scaleX(0.8600);transform-origin:right center;">1,268</div>
<div class="r" style="left:541px;top:456px;width:41px;height:8px;background:#fff;"></div>
<div class="t" style="right:380.1px;text-align:right;top:450.0px;font-size:6.2px;color:#4a4a4a;font-weight:400;font-family:'Liberation Sans',sans-serif;transform:scaleX(0.8600);transform-origin:right center;">1,268</div>
<div class="r" style="left:584px;top:456px;width:41px;height:8px;background:#fff;"></div>
<div class="t" style="right:337.1px;text-align:right;top:450.0px;font-size:6.2px;color:#4a4a4a;font-weight:400;font-family:'Liberation Sans',sans-serif;transform:scaleX(0.8600);transform-origin:right center;">1,268</div>
<div class="r" style="left:627px;top:456px;width:41px;height:8px;background:#fff;"></div>
<div class="t" style="right:294.1px;text-align:right;top:450.0px;font-size:6.2px;color:#4a4a4a;font-weight:400;font-family:'Liberation Sans',sans-serif;transform:scaleX(0.8600);transform-origin:right center;">1,268</div>
<div class="r" style="left:670px;top:456px;width:41px;height:8px;background:#fff;"></div>
<div class="t" style="right:251.10000000000002px;text-align:right;top:450.0px;font-size:6.2px;color:#4a4a4a;font-weight:400;font-family:'Liberation Sans',sans-serif;transform:scaleX(0.8600);transform-origin:right center;">1,268</div>
<div class="r" style="left:713px;top:456px;width:41px;height:8px;background:#d9d9d9;"></div>
<div class="t" style="right:208.60000000000002px;text-align:right;top:450.0px;font-size:6.2px;color:#3e3e3e;font-weight:700;font-family:'Liberation Sans',sans-serif;transform:scaleX(0.8530);transform-origin:right center;">15,216</div>
<svg class="r" style="left:771px;top:456px;" width="1" height="8" viewBox="0 0 1 8"><path d="M0.5 0V8" stroke="#7a7a7a" stroke-width="0.9" stroke-dasharray="1.1 0.9"/></svg>
<div class="t" style="right:172.70000000000005px;text-align:right;top:450.0px;font-size:6.2px;color:#777;font-weight:400;font-family:'Liberation Sans',sans-serif;transform:scaleX(0.8600);transform-origin:right center;">0.0%</div>
<div class="r" style="left:28px;top:464.7px;width:125px;height:1px;background:#fcfcfc;"></div>
<div class="t" style="left:41.9px;top:459.9px;font-size:5.9px;color:#4a4a4a;font-weight:400;font-family:'Liberation Sans',sans-serif;transform:scaleX(1.0108);transform-origin:left center;">[*] 2040 (Interest Payable)</div>
<div class="r" style="left:154px;top:466px;width:41px;height:8px;background:#d9d9d9;"></div>
<div class="t" style="right:767.6px;text-align:right;top:460.0px;font-size:6.2px;color:#3e3e3e;font-weight:700;font-family:'Liberation Sans',sans-serif;transform:scaleX(0.8530);transform-origin:right center;">240,000</div>
<div class="r" style="left:197px;top:466px;width:41px;height:8px;background:#fff;"></div>
<div class="t" style="right:724.1px;text-align:right;top:460.0px;font-size:6.2px;color:#4a4a4a;font-weight:400;font-family:'Liberation Sans',sans-serif;transform:scaleX(0.8600);transform-origin:right center;">20,000</div>
<div class="r" style="left:240px;top:466px;width:41px;height:8px;background:#fff;"></div>
<div class="t" style="right:681.1px;text-align:right;top:460.0px;font-size:6.2px;color:#4a4a4a;font-weight:400;font-family:'Liberation Sans',sans-serif;transform:scaleX(0.8600);transform-origin:right center;">20,000</div>
<div class="r" style="left:283px;top:466px;width:41px;height:8px;background:#fff;"></div>
<div class="t" style="right:638.1px;text-align:right;top:460.0px;font-size:6.2px;color:#4a4a4a;font-weight:400;font-family:'Liberation Sans',sans-serif;transform:scaleX(0.8600);transform-origin:right center;">20,000</div>
<div class="r" style="left:326px;top:466px;width:41px;height:8px;background:#fff;"></div>
<div class="t" style="right:595.1px;text-align:right;top:460.0px;font-size:6.2px;color:#4a4a4a;font-weight:400;font-family:'Liberation Sans',sans-serif;transform:scaleX(0.8600);transform-origin:right center;">20,000</div>
<div class="r" style="left:369px;top:466px;width:41px;height:8px;background:#fff;"></div>
<div class="t" style="right:552.1px;text-align:right;top:460.0px;font-size:6.2px;color:#4a4a4a;font-weight:400;font-family:'Liberation Sans',sans-serif;transform:scaleX(0.8600);transform-origin:right center;">20,000</div>
<div class="r" style="left:412px;top:466px;width:41px;height:8px;background:#fff;"></div>
<div class="t" style="right:509.1px;text-align:right;top:460.0px;font-size:6.2px;color:#4a4a4a;font-weight:400;font-family:'Liberation Sans',sans-serif;transform:scaleX(0.8600);transform-origin:right center;">20,000</div>
<div class="r" style="left:455px;top:466px;width:41px;height:8px;background:#fff;"></div>
<div class="t" style="right:466.1px;text-align:right;top:460.0px;font-size:6.2px;color:#4a4a4a;font-weight:400;font-family:'Liberation Sans',sans-serif;transform:scaleX(0.8600);transform-origin:right center;">20,000</div>
<div class="r" style="left:498px;top:466px;width:41px;height:8px;background:#fff;"></div>
<div class="t" style="right:423.1px;text-align:right;top:460.0px;font-size:6.2px;color:#4a4a4a;font-weight:400;font-family:'Liberation Sans',sans-serif;transform:scaleX(0.8600);transform-origin:right center;">20,000</div>
<div class="r" style="left:541px;top:466px;width:41px;height:8px;background:#fff;"></div>
<div class="t" style="right:380.1px;text-align:right;top:460.0px;font-size:6.2px;color:#4a4a4a;font-weight:400;font-family:'Liberation Sans',sans-serif;transform:scaleX(0.8600);transform-origin:right center;">20,000</div>
<div class="r" style="left:584px;top:466px;width:41px;height:8px;background:#fff;"></div>
<div class="t" style="right:337.1px;text-align:right;top:460.0px;font-size:6.2px;color:#4a4a4a;font-weight:400;font-family:'Liberation Sans',sans-serif;transform:scaleX(0.8600);transform-origin:right center;">20,000</div>
<div class="r" style="left:627px;top:466px;width:41px;height:8px;background:#fff;"></div>
<div class="t" style="right:294.1px;text-align:right;top:460.0px;font-size:6.2px;color:#4a4a4a;font-weight:400;font-family:'Liberation Sans',sans-serif;transform:scaleX(0.8600);transform-origin:right center;">20,000</div>
<div class="r" style="left:670px;top:466px;width:41px;height:8px;background:#fff;"></div>
<div class="t" style="right:251.10000000000002px;text-align:right;top:460.0px;font-size:6.2px;color:#4a4a4a;font-weight:400;font-family:'Liberation Sans',sans-serif;transform:scaleX(0.8600);transform-origin:right center;">20,000</div>
<div class="r" style="left:713px;top:466px;width:41px;height:8px;background:#d9d9d9;"></div>
<div class="t" style="right:208.60000000000002px;text-align:right;top:460.0px;font-size:6.2px;color:#3e3e3e;font-weight:700;font-family:'Liberation Sans',sans-serif;transform:scaleX(0.8530);transform-origin:right center;">240,000</div>
<svg class="r" style="left:771px;top:466px;" width="1" height="8" viewBox="0 0 1 8"><path d="M0.5 0V8" stroke="#7a7a7a" stroke-width="0.9" stroke-dasharray="1.1 0.9"/></svg>
<div class="t" style="right:172.70000000000005px;text-align:right;top:460.0px;font-size:6.2px;color:#777;font-weight:400;font-family:'Liberation Sans',sans-serif;transform:scaleX(0.8600);transform-origin:right center;">0.0%</div>
<div class="r" style="left:28px;top:474.7px;width:125px;height:1px;background:#fcfcfc;"></div>
<div class="t" style="left:41.9px;top:469.9px;font-size:5.9px;color:#4a4a4a;font-weight:400;font-family:'Liberation Sans',sans-serif;transform:scaleX(0.9891);transform-origin:left center;">[*] 2050 (Current Tax Payable)</div>
<div class="r" style="left:154px;top:476px;width:41px;height:8px;background:#d9d9d9;"></div>
<div class="t" style="right:767.6px;text-align:right;top:470.0px;font-size:6.2px;color:#3e3e3e;font-weight:700;font-family:'Liberation Sans',sans-serif;transform:scaleX(0.8530);transform-origin:right center;">240,000</div>
<div class="r" style="left:197px;top:476px;width:41px;height:8px;background:#fff;"></div>
<div class="t" style="right:724.1px;text-align:right;top:470.0px;font-size:6.2px;color:#4a4a4a;font-weight:400;font-family:'Liberation Sans',sans-serif;transform:scaleX(0.8600);transform-origin:right center;">20,000</div>
<div class="r" style="left:240px;top:476px;width:41px;height:8px;background:#fff;"></div>
<div class="t" style="right:681.1px;text-align:right;top:470.0px;font-size:6.2px;color:#4a4a4a;font-weight:400;font-family:'Liberation Sans',sans-serif;transform:scaleX(0.8600);transform-origin:right center;">20,000</div>
<div class="r" style="left:283px;top:476px;width:41px;height:8px;background:#fff;"></div>
<div class="t" style="right:638.1px;text-align:right;top:470.0px;font-size:6.2px;color:#4a4a4a;font-weight:400;font-family:'Liberation Sans',sans-serif;transform:scaleX(0.8600);transform-origin:right center;">20,000</div>
<div class="r" style="left:326px;top:476px;width:41px;height:8px;background:#fff;"></div>
<div class="t" style="right:595.1px;text-align:right;top:470.0px;font-size:6.2px;color:#4a4a4a;font-weight:400;font-family:'Liberation Sans',sans-serif;transform:scaleX(0.8600);transform-origin:right center;">20,000</div>
<div class="r" style="left:369px;top:476px;width:41px;height:8px;background:#fff;"></div>
<div class="t" style="right:552.1px;text-align:right;top:470.0px;font-size:6.2px;color:#4a4a4a;font-weight:400;font-family:'Liberation Sans',sans-serif;transform:scaleX(0.8600);transform-origin:right center;">20,000</div>
<div class="r" style="left:412px;top:476px;width:41px;height:8px;background:#fff;"></div>
<div class="t" style="right:509.1px;text-align:right;top:470.0px;font-size:6.2px;color:#4a4a4a;font-weight:400;font-family:'Liberation Sans',sans-serif;transform:scaleX(0.8600);transform-origin:right center;">20,000</div>
<div class="r" style="left:455px;top:476px;width:41px;height:8px;background:#fff;"></div>
<div class="t" style="right:466.1px;text-align:right;top:470.0px;font-size:6.2px;color:#4a4a4a;font-weight:400;font-family:'Liberation Sans',sans-serif;transform:scaleX(0.8600);transform-origin:right center;">20,000</div>
<div class="r" style="left:498px;top:476px;width:41px;height:8px;background:#fff;"></div>
<div class="t" style="right:423.1px;text-align:right;top:470.0px;font-size:6.2px;color:#4a4a4a;font-weight:400;font-family:'Liberation Sans',sans-serif;transform:scaleX(0.8600);transform-origin:right center;">20,000</div>
<div class="r" style="left:541px;top:476px;width:41px;height:8px;background:#fff;"></div>
<div class="t" style="right:380.1px;text-align:right;top:470.0px;font-size:6.2px;color:#4a4a4a;font-weight:400;font-family:'Liberation Sans',sans-serif;transform:scaleX(0.8600);transform-origin:right center;">20,000</div>
<div class="r" style="left:584px;top:476px;width:41px;height:8px;background:#fff;"></div>
<div class="t" style="right:337.1px;text-align:right;top:470.0px;font-size:6.2px;color:#4a4a4a;font-weight:400;font-family:'Liberation Sans',sans-serif;transform:scaleX(0.8600);transform-origin:right center;">20,000</div>
<div class="r" style="left:627px;top:476px;width:41px;height:8px;background:#fff;"></div>
<div class="t" style="right:294.1px;text-align:right;top:470.0px;font-size:6.2px;color:#4a4a4a;font-weight:400;font-family:'Liberation Sans',sans-serif;transform:scaleX(0.8600);transform-origin:right center;">20,000</div>
<div class="r" style="left:670px;top:476px;width:41px;height:8px;background:#fff;"></div>
<div class="t" style="right:251.10000000000002px;text-align:right;top:470.0px;font-size:6.2px;color:#4a4a4a;font-weight:400;font-family:'Liberation Sans',sans-serif;transform:scaleX(0.8600);transform-origin:right center;">20,000</div>
<div class="r" style="left:713px;top:476px;width:41px;height:8px;background:#d9d9d9;"></div>
<div class="t" style="right:208.60000000000002px;text-align:right;top:470.0px;font-size:6.2px;color:#3e3e3e;font-weight:700;font-family:'Liberation Sans',sans-serif;transform:scaleX(0.8530);transform-origin:right center;">240,000</div>
<svg class="r" style="left:771px;top:476px;" width="1" height="8" viewBox="0 0 1 8"><path d="M0.5 0V8" stroke="#7a7a7a" stroke-width="0.9" stroke-dasharray="1.1 0.9"/></svg>
<div class="t" style="right:172.70000000000005px;text-align:right;top:470.0px;font-size:6.2px;color:#777;font-weight:400;font-family:'Liberation Sans',sans-serif;transform:scaleX(0.8600);transform-origin:right center;">0.0%</div>
<div class="r" style="left:28px;top:484.7px;width:125px;height:1px;background:#fcfcfc;"></div>
<div class="t" style="left:41.9px;top:479.9px;font-size:5.9px;color:#4a4a4a;font-weight:400;font-family:'Liberation Sans',sans-serif;transform:scaleX(0.9926);transform-origin:left center;">[*] 2060 (Dividend Payable)</div>
<div class="r" style="left:154px;top:486px;width:41px;height:8px;background:#d9d9d9;"></div>
<div class="t" style="right:767.6px;text-align:right;top:480.0px;font-size:6.2px;color:#3e3e3e;font-weight:700;font-family:'Liberation Sans',sans-serif;transform:scaleX(0.8530);transform-origin:right center;">240,000</div>
<div class="r" style="left:197px;top:486px;width:41px;height:8px;background:#fff;"></div>
<div class="t" style="right:724.1px;text-align:right;top:480.0px;font-size:6.2px;color:#4a4a4a;font-weight:400;font-family:'Liberation Sans',sans-serif;transform:scaleX(0.8600);transform-origin:right center;">20,000</div>
<div class="r" style="left:240px;top:486px;width:41px;height:8px;background:#fff;"></div>
<div class="t" style="right:681.1px;text-align:right;top:480.0px;font-size:6.2px;color:#4a4a4a;font-weight:400;font-family:'Liberation Sans',sans-serif;transform:scaleX(0.8600);transform-origin:right center;">20,000</div>
<div class="r" style="left:283px;top:486px;width:41px;height:8px;background:#fff;"></div>
<div class="t" style="right:638.1px;text-align:right;top:480.0px;font-size:6.2px;color:#4a4a4a;font-weight:400;font-family:'Liberation Sans',sans-serif;transform:scaleX(0.8600);transform-origin:right center;">20,000</div>
<div class="r" style="left:326px;top:486px;width:41px;height:8px;background:#fff;"></div>
<div class="t" style="right:595.1px;text-align:right;top:480.0px;font-size:6.2px;color:#4a4a4a;font-weight:400;font-family:'Liberation Sans',sans-serif;transform:scaleX(0.8600);transform-origin:right center;">20,000</div>
<div class="r" style="left:369px;top:486px;width:41px;height:8px;background:#fff;"></div>
<div class="t" style="right:552.1px;text-align:right;top:480.0px;font-size:6.2px;color:#4a4a4a;font-weight:400;font-family:'Liberation Sans',sans-serif;transform:scaleX(0.8600);transform-origin:right center;">20,000</div>
<div class="r" style="left:412px;top:486px;width:41px;height:8px;background:#fff;"></div>
<div class="t" style="right:509.1px;text-align:right;top:480.0px;font-size:6.2px;color:#4a4a4a;font-weight:400;font-family:'Liberation Sans',sans-serif;transform:scaleX(0.8600);transform-origin:right center;">20,000</div>
<div class="r" style="left:455px;top:486px;width:41px;height:8px;background:#fff;"></div>
<div class="t" style="right:466.1px;text-align:right;top:480.0px;font-size:6.2px;color:#4a4a4a;font-weight:400;font-family:'Liberation Sans',sans-serif;transform:scaleX(0.8600);transform-origin:right center;">20,000</div>
<div class="r" style="left:498px;top:486px;width:41px;height:8px;background:#fff;"></div>
<div class="t" style="right:423.1px;text-align:right;top:480.0px;font-size:6.2px;color:#4a4a4a;font-weight:400;font-family:'Liberation Sans',sans-serif;transform:scaleX(0.8600);transform-origin:right center;">20,000</div>
<div class="r" style="left:541px;top:486px;width:41px;height:8px;background:#fff;"></div>
<div class="t" style="right:380.1px;text-align:right;top:480.0px;font-size:6.2px;color:#4a4a4a;font-weight:400;font-family:'Liberation Sans',sans-serif;transform:scaleX(0.8600);transform-origin:right center;">20,000</div>
<div class="r" style="left:584px;top:486px;width:41px;height:8px;background:#fff;"></div>
<div class="t" style="right:337.1px;text-align:right;top:480.0px;font-size:6.2px;color:#4a4a4a;font-weight:400;font-family:'Liberation Sans',sans-serif;transform:scaleX(0.8600);transform-origin:right center;">20,000</div>
<div class="r" style="left:627px;top:486px;width:41px;height:8px;background:#fff;"></div>
<div class="t" style="right:294.1px;text-align:right;top:480.0px;font-size:6.2px;color:#4a4a4a;font-weight:400;font-family:'Liberation Sans',sans-serif;transform:scaleX(0.8600);transform-origin:right center;">20,000</div>
<div class="r" style="left:670px;top:486px;width:41px;height:8px;background:#fff;"></div>
<div class="t" style="right:251.10000000000002px;text-align:right;top:480.0px;font-size:6.2px;color:#4a4a4a;font-weight:400;font-family:'Liberation Sans',sans-serif;transform:scaleX(0.8600);transform-origin:right center;">20,000</div>
<div class="r" style="left:713px;top:486px;width:41px;height:8px;background:#d9d9d9;"></div>
<div class="t" style="right:208.60000000000002px;text-align:right;top:480.0px;font-size:6.2px;color:#3e3e3e;font-weight:700;font-family:'Liberation Sans',sans-serif;transform:scaleX(0.8530);transform-origin:right center;">240,000</div>
<svg class="r" style="left:771px;top:486px;" width="1" height="8" viewBox="0 0 1 8"><path d="M0.5 0V8" stroke="#7a7a7a" stroke-width="0.9" stroke-dasharray="1.1 0.9"/></svg>
<div class="t" style="right:172.70000000000005px;text-align:right;top:480.0px;font-size:6.2px;color:#777;font-weight:400;font-family:'Liberation Sans',sans-serif;transform:scaleX(0.8600);transform-origin:right center;">0.0%</div>
<div class="r" style="left:0px;top:495px;width:960px;height:14.5px;background:#e6e6e6;"></div>
<div class="r" style="left:0px;top:495px;width:949px;height:0.8px;background:#c8c8c8;"></div>
<svg class="r" style="left:13px;top:500.5px;" width="3" height="4" viewBox="0 0 3 4"><path d="M2.5 0.3L0.6 2L2.5 3.7" fill="none" stroke="#b8b8b8" stroke-width="0.7"/></svg>
<svg class="r" style="left:27.8px;top:500.5px;" width="3" height="4" viewBox="0 0 3 4"><path d="M0.5 0.3L2.4 2L0.5 3.7" fill="none" stroke="#b8b8b8" stroke-width="0.7"/></svg>
<div class="r" style="left:50.5px;top:496.5px;width:0.8px;height:11px;background:#c8c8c8;"></div>
<div class="r" style="left:51.3px;top:496.8px;width:22.8px;height:10.7px;background:#6ed3b6;"></div>
<div class="t" style="left:56.8px;top:492.6px;font-size:6.5px;color:#333;font-weight:400;font-family:'Liberation Sans',sans-serif;transform:scaleX(0.9361);transform-origin:left center;">P&amp;L</div>
<div class="r" style="left:75.3px;top:496px;width:54px;height:11.5px;background:linear-gradient(#ffffff,#f2f8f5 55%,#c9f0df);"></div>
<div class="r" style="left:75.3px;top:507px;width:54px;height:1.2px;background:#2d5c3e;"></div>
<div class="t" style="left:81px;top:492.9px;font-size:6.8px;color:#2a6e45;font-weight:700;font-family:'Liberation Sans',sans-serif;transform:scaleX(0.9080);transform-origin:left center;">Balance Sheet</div>
<div class="r" style="left:130.7px;top:496.8px;width:41.3px;height:10.7px;background:#6ed3b6;"></div>
<div class="t" style="left:137px;top:492.6px;font-size:6.6px;color:#333;font-weight:400;font-family:'Liberation Sans',sans-serif;transform:scaleX(0.9107);transform-origin:left center;">Cash Flow</div>
<div class="r" style="left:172.5px;top:497px;width:0.8px;height:10px;background:#c0c0c0;"></div>
<svg class="r" style="left:188.5px;top:498px;" width="9" height="9" viewBox="0 0 9 9"><circle cx="4.5" cy="4.5" r="3.8" fill="none" stroke="#777" stroke-width="0.8"/><path d="M2.6 4.5H6.4M4.5 2.6V6.4" stroke="#777" stroke-width="0.8"/></svg>
<div class="r" style="left:576px;top:500px;width:0.8px;height:0.8px;background:#999;"></div>
<div class="r" style="left:576px;top:502px;width:0.8px;height:0.8px;background:#999;"></div>
<div class="r" style="left:576px;top:504px;width:0.8px;height:0.8px;background:#999;"></div>
<div class="r" style="left:584px;top:499px;width:364px;height:7px;background:#dadada;"></div>
<div class="r" style="left:584px;top:499px;width:195.5px;height:7px;background:#fff;border:0.6px solid #c4c4c4;box-sizing:border-box;"></div>
<div class="r" style="left:584px;top:499px;width:7px;height:7px;background:#fff;border:0.6px solid #c4c4c4;box-sizing:border-box;"></div>
<svg class="r" style="left:586px;top:500.5px;" width="3" height="4" viewBox="0 0 3 4"><path d="M2.5 0L0.3 2L2.5 4Z" fill="#555"/></svg>
<div class="r" style="left:941.5px;top:499.5px;width:7px;height:6.5px;background:#fff;border:0.6px solid #c4c4c4;box-sizing:border-box;"></div>
<svg class="r" style="left:943.5px;top:500.7px;" width="3" height="4" viewBox="0 0 3 4"><path d="M0.5 0L2.7 2L0.5 4Z" fill="#555"/></svg>
<div class="r" style="left:0px;top:509.5px;width:960px;height:10.5px;background:#f3f3f3;"></div>
<div class="r" style="left:0px;top:509.2px;width:960px;height:0.6px;background:#dcdcdc;"></div>
<div class="r" style="left:0px;top:519.7px;width:960px;height:1.3px;background:#4a4a4a;"></div>
<div class="t" style="left:4px;top:505.0px;font-size:6.5px;color:#444;font-weight:400;font-family:'Liberation Sans',sans-serif;transform:scaleX(0.7852);transform-origin:left center;">Ready</div>
<svg class="r" style="left:28.5px;top:511.5px;" width="7" height="7" viewBox="0 0 7 7"><rect x="0.5" y="1.5" width="6" height="5" fill="none" stroke="#777" stroke-width="0.8"/><path d="M0.5 3.3H6.5M3.5 1.5V6.5" stroke="#777" stroke-width="0.7"/><rect x="0.5" y="0" width="2" height="1.5" fill="#777"/></svg>
<div class="r" style="left:817px;top:509.8px;width:18.5px;height:10.2px;background:#d0d0d0;"></div>
<svg class="r" style="left:822.5px;top:511.5px;" width="7" height="7" viewBox="0 0 7 7"><rect x="0.5" y="0.5" width="6" height="6" fill="none" stroke="#666" stroke-width="0.7"/><path d="M2.5 0.5V6.5M4.5 0.5V6.5M0.5 2.5H6.5M0.5 4.5H6.5" stroke="#666" stroke-width="0.6"/></svg>
<svg class="r" style="left:842px;top:511.5px;" width="7" height="7" viewBox="0 0 7 7"><rect x="0.5" y="0.5" width="6" height="6" fill="none" stroke="#888" stroke-width="0.7"/><path d="M2 0.5V6.5M5 0.5V6.5" stroke="#888" stroke-width="0.6"/></svg>
<svg class="r" style="left:860.5px;top:511.5px;" width="8" height="7" viewBox="0 0 8 7"><path d="M0.5 0.5V6.5H7.5V0.5M2.5 0.5V3.5H5.5V0.5" fill="none" stroke="#888" stroke-width="0.7"/></svg>
<div class="r" style="left:876.5px;top:514.3px;width:2.5px;height:0.9px;background:#777;"></div>
<div class="r" style="left:881.5px;top:514.5px;width:50px;height:0.6px;background:#bbb;"></div>
<div class="r" style="left:905.3px;top:511.5px;width:2px;height:6px;background:#666;"></div>
<svg class="r" style="left:933px;top:512.5px;" width="4" height="4" viewBox="0 0 4 4"><path d="M0.3 2H3.7M2 0.3V3.7" stroke="#666" stroke-width="0.9"/></svg>
<div class="t" style="left:943.1px;top:505.0px;font-size:6.5px;color:#555;font-weight:400;font-family:'Liberation Sans',sans-serif;transform:scaleX(0.7692);transform-origin:left center;">100%</div>
</body></html>
